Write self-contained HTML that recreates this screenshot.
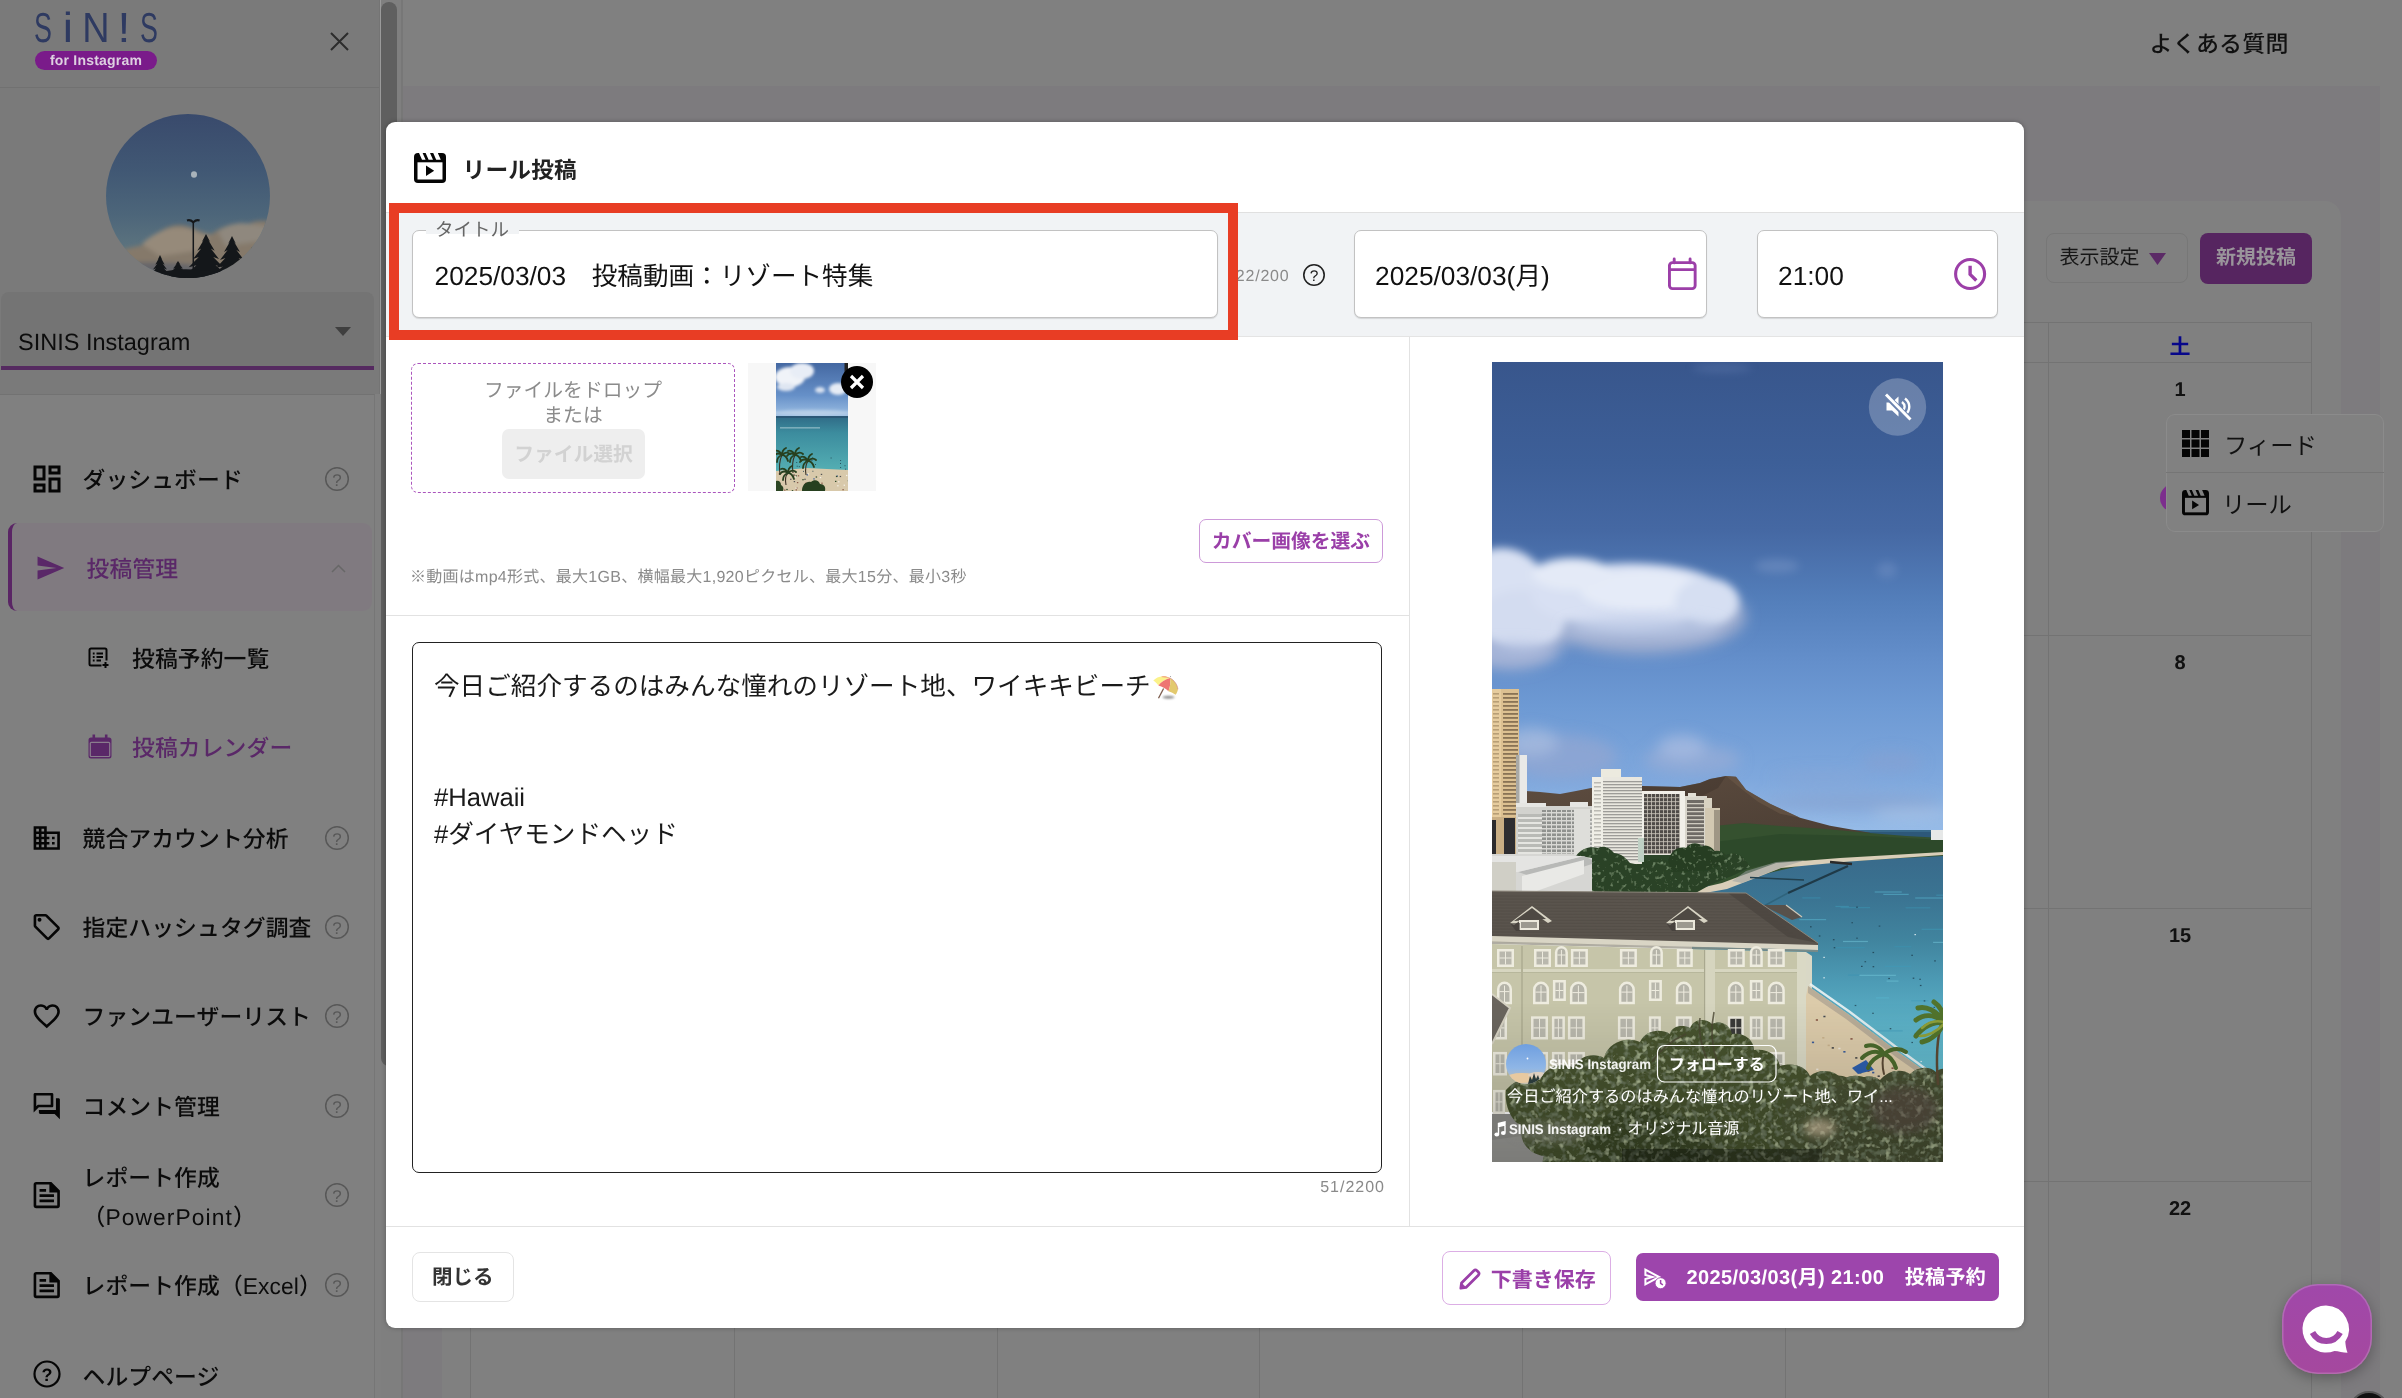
<!DOCTYPE html>
<html lang="ja">
<head>
<meta charset="utf-8">
<title>リール投稿</title>
<style>
*{box-sizing:border-box;margin:0;padding:0}
html,body{width:2402px;height:1398px;overflow:hidden;background:#7d7b7e}
body{position:relative;font-family:"Liberation Sans","Noto Sans CJK JP",sans-serif;color:#111;-webkit-font-smoothing:antialiased;text-rendering:geometricPrecision}
#root{position:absolute;left:0;top:0;width:2402px;height:1398px;overflow:hidden;will-change:transform}
.abs{position:absolute}
.jp{font-family:"Liberation Sans","Noto Sans CJK JP",sans-serif}
svg{display:block;overflow:visible}
/* ---------- background page (already dimmed) ---------- */
#topbar{left:402px;top:0;width:2000px;height:86px;background:#808080}
#rightstrip{left:2380px;top:0;width:22px;height:1398px;background:#808080}
#sidebar{left:0;top:0;width:380px;height:1398px;background:#7a7a7a;border-right:1px solid #747474}
#sbtop{left:0;top:0;width:379px;height:88px;border-bottom:1px solid #717171}
#navbox{left:0;top:394px;width:375px;height:1010px;background:#808080;border-top:1px solid #727272;border-right:1px solid #767676}
#scrolltrack{left:380px;top:0;width:23px;height:1398px;background:#7f7f7f;border-right:2px solid #777}
#scrollthumb{left:381px;top:2px;width:16px;height:1064px;border-radius:8px;background:#5f5f5f}
.nav{position:absolute;left:0;width:374px;height:60px}
.nav .ic{position:absolute;left:31px;top:50%;transform:translateY(-50%)}
.nav .tx{position:absolute;left:82.500px;top:50%;transform:translateY(-50%);margin-top:1px;font-size:22.800px;font-weight:500;white-space:nowrap;line-height:39px;color:#0b0b0b;letter-spacing:.1px}
.nav .hp{position:absolute;left:324px;top:50%;margin-top:-13px;width:26px;height:26px}
.nav.sub .ic{left:88px}
.nav.sub .tx{left:132px}
.lg{top:5px;height:46px;font-family:"Liberation Sans",sans-serif;font-size:42px;line-height:46px;color:#2e3a61;text-align:center;white-space:nowrap}
.lg b{display:inline-block;font-weight:400}
.pur{color:#5a2868 !important}
#card{left:442px;top:201px;width:1899px;height:1300px;background:#808080;border-radius:16px}
.vl{position:absolute;width:1px;background:#737373;top:322px;height:1100px}
.hl{position:absolute;height:1px;background:#737373;left:470px;width:1842px}
.dn{position:absolute;width:60px;left:2150px;text-align:center;font-weight:700;font-size:20px;color:#111;line-height:24px}
/* ---------- modal ---------- */
#modal{left:386px;top:122px;width:1638px;height:1206px;background:#fff;border-radius:9px;overflow:hidden;box-shadow:0 0 5px rgba(0,0,0,.28);will-change:transform}
#band{left:0;top:90px;width:1638px;height:125px;background:#f1f3f5;border-top:1px solid #e0e0e0;border-bottom:1px solid #e4e4e4}
.inp{position:absolute;background:#fff;border:1px solid #c2c2c2;border-radius:7px;top:108px;height:88px;box-shadow:0 1px 1px rgba(0,0,0,.12)}
.inp .v{position:absolute;left:21px;top:0;line-height:90px;font-size:25.600px;color:#111;white-space:nowrap}
.d{font-size:26.300px}
.gl{position:absolute;background:#e2e2e2}
.btn{position:absolute;border-radius:8px;white-space:nowrap;font-weight:700}
</style>
</head>
<body>
<div id="root">

<!-- ================= BACKGROUND PAGE ================= -->
<div class="abs" id="topbar"></div>
<div class="abs" id="rightstrip"></div>
<div class="abs" id="card"></div>
<div class="abs jp" style="left:2149.500px;top:27px;font-size:23px;font-weight:500;line-height:34px;color:#111;white-space:nowrap;letter-spacing:.2px">よくある質問</div>

<!--CALENDAR-->
<div class="vl" style="left:470px"></div><div class="vl" style="left:734px"></div><div class="vl" style="left:997px"></div><div class="vl" style="left:1259px"></div><div class="vl" style="left:1522px"></div><div class="vl" style="left:1785px"></div><div class="vl" style="left:2048px"></div><div class="vl" style="left:2311px"></div>
<div class="hl" style="top:322px"></div><div class="hl" style="top:362px"></div><div class="hl" style="top:635px"></div><div class="hl" style="top:908px"></div><div class="hl" style="top:1181px"></div>
<div class="abs jp" style="left:2150px;width:60px;top:334.500px;text-align:center;font-size:21px;font-weight:700;line-height:26px;color:#07078a">土</div>
<div class="dn" style="top:378px">1</div><div class="dn" style="top:651px">8</div><div class="dn" style="top:924px">15</div><div class="dn" style="top:1197px">22</div>
<!-- toolbar buttons -->
<div class="abs jp" style="left:2046px;top:233px;width:142px;height:50px;border:1px solid #777;border-radius:8px;font-size:20px;line-height:48px;padding-left:12.500px;color:#161616;white-space:nowrap">表示設定</div>
<svg class="abs" style="left:2149px;top:253px" width="17" height="12" viewBox="0 0 17 12"><path d="M0 0h17L8.5 12z" fill="#5b2a66"/></svg>
<div class="abs jp" style="left:2200px;top:233px;width:112px;height:51px;background:#562560;border-radius:8px;font-size:20px;font-weight:700;line-height:51px;text-align:center;color:#9a959b;white-space:nowrap">新規投稿</div>
<!-- purple chip sliver behind popup -->
<div class="abs" style="left:2160px;top:484px;width:30px;height:28px;border-radius:14px;background:#7c2e8d"></div>
<!-- popup menu -->
<div class="abs" style="left:2166px;top:414px;width:218px;height:118px;background:#818181;border:1px solid #8b8b8b;border-radius:9px"></div>
<div class="abs" style="left:2166px;top:472px;width:218px;height:1px;background:#757575"></div>
<svg class="abs" style="left:2182px;top:430px" width="27" height="27" viewBox="0 0 27 27"><g fill="#050505"><rect x="0" y="0" width="8" height="8"/><rect x="9.5" y="0" width="8" height="8"/><rect x="19" y="0" width="8" height="8"/><rect x="0" y="9.5" width="8" height="8"/><rect x="9.5" y="9.5" width="8" height="8"/><rect x="19" y="9.5" width="8" height="8"/><rect x="0" y="19" width="8" height="8"/><rect x="9.5" y="19" width="8" height="8"/><rect x="19" y="19" width="8" height="8"/></g></svg>
<div class="abs jp" style="left:2224px;top:429.500px;font-size:23.300px;line-height:32px;color:#111;white-space:nowrap">フィード</div>
<svg class="abs" style="left:2182px;top:489.500px" width="27" height="25.300" viewBox="0 0 32 30"><rect x="0" y="0" width="32" height="30" rx="4" fill="#050505"/><rect x="3.500" y="9.300" width="25" height="17.200" fill="#818181"/><path d="M4.800 -.500h3.600l3.200 7.300H8zM11.400 -.500h4.400l3.200 7.300h-4.400zM19 -.500h4.600l3.200 7.300h-4.600z" fill="#818181"/><path d="M12 12.500v10.400l8.200-5.200z" fill="#050505"/></svg>
<div class="abs jp" style="left:2222px;top:488.500px;font-size:23.300px;line-height:32px;color:#111;white-space:nowrap">リール</div>


<!--SIDEBAR-->
<div class="abs" id="sidebar"></div>
<div class="abs" id="sbtop"></div>
<div class="abs" id="scrolltrack"></div>
<div class="abs" style="left:380px;top:0;width:1px;height:394px;background:#9a9a9a"></div>
<div class="abs" style="left:375px;top:394px;width:6px;height:1004px;background:#808080"></div>
<div class="abs" id="scrollthumb"></div>
<!-- logo -->
<div class="abs lg" style="left:23.4px;width:40px;transform:scaleX(0.64)">S</div><div class="abs lg" style="left:47.900000000000006px;width:40px;transform:scaleX(1.1)">i</div><div class="abs lg" style="left:76.1px;width:40px;transform:scaleX(0.9)">N</div><div class="abs lg" style="left:104px;width:40px;transform:scaleX(1.1)">!</div><div class="abs lg" style="left:129px;width:40px;transform:scaleX(0.64)">S</div>
<div class="abs" style="left:35px;top:51px;width:122px;height:19px;border-radius:10px;background:#7a1b8a;color:#ddd0e0;font-family:'Liberation Sans',sans-serif;font-weight:700;font-size:14px;line-height:19px;text-align:center;letter-spacing:.2px">for Instagram</div>
<svg class="abs" style="left:330px;top:32px" width="19" height="19" viewBox="0 0 19 19"><path d="M1 1l17 17M18 1L1 18" stroke="#2c2c2c" stroke-width="2" fill="none"/></svg>
<!-- avatar -->
<svg class="abs" style="left:106px;top:114px" width="164" height="164" viewBox="0 0 164 164">
 <defs>
  <clipPath id="avc"><circle cx="82" cy="82" r="82"/></clipPath>
  <linearGradient id="avsky" x1="0" y1="0" x2="0" y2="1"><stop offset="0" stop-color="#394a6c"/><stop offset=".35" stop-color="#415874"/><stop offset=".62" stop-color="#4d667a"/><stop offset=".8" stop-color="#5b727e"/><stop offset="1" stop-color="#6a7a80"/></linearGradient>
  <filter id="avb" x="-20%" y="-20%" width="140%" height="140%"><feGaussianBlur stdDeviation="2.200"/></filter>
 </defs>
 <g clip-path="url(#avc)">
  <rect width="164" height="164" fill="url(#avsky)"/>
  <g filter="url(#avb)"><path d="M10 140c10-8 24-6 34-12 8-12 24-20 36-16 10 2 16 8 26 8 10-8 24-12 36-10 8-4 16-4 24-2v60H10z" fill="#85796a"/><path d="M36 130c10-10 26-18 40-16 12 0 18 8 28 8l-10 14-40 6z" fill="#968a7a"/><path d="M112 118c10-8 22-10 32-8l16 2v14l-40 6z" fill="#8f887e"/><path d="M0 152c30-6 70-4 100 0l64 4v10H0z" fill="#66666a"/></g>
  <ellipse cx="88" cy="60.500" rx="3" ry="3.300" fill="#a9b3ba"/>
  <path d="M87.300 164V108" stroke="#15181b" stroke-width="1.500" fill="none"/><path d="M81 106.500c2-.800 4.500 0 6.300 1.800 1.800-1.800 4.300-2.600 6.300-1.800" stroke="#15181b" stroke-width="2" fill="none"/>
  <g fill="#14171a"><path d="M100 120L95.7 128.3L97.6 126.3L91.3 136.7L95.2 134.6L87.0 145.0L92.8 142.9L82.7 153.3L90.5 151.2L78.3 161.7L88.1 159.6L74.0 170.0L126.0 170L111.9 159.6L121.7 161.7L109.5 151.2L117.3 153.3L107.2 142.9L113.0 145.0L104.8 134.6L108.7 136.7L102.4 126.3L104.3 128.3z"/><path d="M126 122L122.0 130.0L123.8 128.0L118.0 138.0L121.6 136.0L114.0 146.0L119.4 144.0L110.0 154.0L117.2 152.0L106.0 162.0L115.0 160.0L102.0 170.0L150.0 170L137.0 160.0L146.0 162.0L134.8 152.0L142.0 154.0L132.6 144.0L138.0 146.0L130.4 136.0L134.0 138.0L128.2 128.0L130.0 130.0z"/><path d="M54 141L51.7 145.8L52.7 144.6L49.3 150.7L51.4 149.5L47.0 155.5L50.1 154.3L44.7 160.3L48.9 159.1L42.3 165.2L47.6 164.0L40.0 170.0L68.0 170L60.4 164.0L65.7 165.2L59.1 159.1L63.3 160.3L57.9 154.3L61.0 155.5L56.6 149.5L58.7 150.7L55.3 144.6L56.3 145.8z"/><path d="M72 147L69.5 150.8L70.6 149.9L67.0 154.7L69.2 153.7L64.5 158.5L67.9 157.5L62.0 162.3L66.5 161.4L59.5 166.2L65.1 165.2L57.0 170.0L87.0 170L78.9 165.2L84.5 166.2L77.5 161.4L82.0 162.3L76.1 157.5L79.5 158.5L74.8 153.7L77.0 154.7L73.4 149.9L74.5 150.8z"/><path d="M146 133L144.3 139.2L145.1 137.6L142.7 145.3L144.2 143.8L141.0 151.5L143.2 150.0L139.3 157.7L142.3 156.1L137.7 163.8L141.4 162.3L136.0 170.0L156.0 170L150.6 162.3L154.3 163.8L149.7 156.1L152.7 157.7L148.8 150.0L151.0 151.5L147.8 143.8L149.3 145.3L146.9 137.6L147.7 139.2z"/><path d="M44 164c10-8 30-10 50-8s40 2 60 8z"/></g>
 </g>
</svg>
<!-- account select -->
<div class="abs" style="left:1px;top:292px;width:373px;height:78px;background:#747474;border-radius:8px 8px 0 0;border-bottom:4px solid #552a60"></div>
<div class="abs" style="left:18px;top:324px;font-family:'Liberation Sans',sans-serif;font-size:23.500px;line-height:36px;color:#0d0d0d;white-space:nowrap">SINIS Instagram</div>
<svg class="abs" style="left:335px;top:327px" width="16" height="9" viewBox="0 0 16 9"><path d="M0 0h16L8 9z" fill="#3f3f3f"/></svg>
<div class="abs" id="navbox"></div>
<!-- active item bg -->
<div class="abs" style="left:8px;top:523px;width:364px;height:88px;background:#807a80;border-left:4.500px solid #5a2565;border-radius:9px"></div>
<div class="nav " style="top:449.0px;height:60px"><svg class="ic" style="left:28.800px" width="36" height="36" viewBox="0 0 24 24" fill="#050505"><path d="M19 5v2h-4V5h4M9 5v6H5V5h4m10 8v6h-4v-6h4M9 17v2H5v-2h4M21 3h-8v6h8V3zM11 3H3v10h8V3zm10 8h-8v10h8V11zm-10 4H3v6h8v-6z"/></svg><div class="tx jp ">ダッシュボード</div><svg class="hp" viewBox="0 0 26 26"><circle cx="13" cy="13" r="11.300" fill="none" stroke="#585858" stroke-width="1.500"/><text x="13" y="19.500" text-anchor="middle" font-family="Liberation Sans, sans-serif" font-size="17" fill="#585858">?</text></svg></div>
<div class="nav " style="top:538.0px;height:60px"><svg class="ic" style="left:35.300px" width="30.500" height="30.500" viewBox="0 0 24 24" fill="#5a2868"><path d="M2.010 21L23 12 2.010 3 2 10l15 2-15 2z"/></svg><div class="tx jp pur" style="left:86.500px">投稿管理</div></div>
<svg class="abs" style="left:331px;top:564px" width="15" height="9" viewBox="0 0 15 9"><path d="M1 8l6.500-6.500L14 8" fill="none" stroke="#676767" stroke-width="1.500"/></svg>
<div class="nav sub" style="top:628.0px;height:60px"><svg class="ic" width="22" height="22" viewBox="0 0 22 22" fill="none" stroke="#050505" stroke-width="2"><path d="M13.500 18.500H3a1.500 1.500 0 0 1-1.500-1.500V3A1.500 1.500 0 0 1 3 1.500h14A1.500 1.500 0 0 1 18.500 3v10.500"/><path d="M8.500 6.500h6.500M8.500 10h6.500M8.500 13.500h4.500M4.800 6.500h1.800M4.800 10h1.800M4.800 13.500h1.800M17.500 15v6M14.500 18h6"/></svg><div class="tx jp ">投稿予約一覧</div></div>
<div class="nav sub" style="top:717.0px;height:60px"><svg class="ic" width="24" height="25" viewBox="0 0 24 25"><path d="M3 3h18a2.500 2.500 0 0 1 2.500 2.500v16A2.500 2.500 0 0 1 21 24H3A2.500 2.500 0 0 1 .5 21.500v-16A2.500 2.500 0 0 1 3 3z" fill="#5a2868"/><rect x="2.300" y="7.800" width="19.400" height="14.200" rx="1" fill="none" stroke="#8a7d8d" stroke-width="1.200"/><rect x="4.500" y="0" width="2.600" height="5" fill="#5a2868"/><rect x="16.900" y="0" width="2.600" height="5" fill="#5a2868"/></svg><div class="tx jp pur">投稿カレンダー</div></div>
<div class="nav " style="top:807.5px;height:60px"><svg class="ic" width="31.500" height="31.500" viewBox="0 0 24 24" fill="#050505"><path d="M12 7V3H2v18h20V7H12zM6 19H4v-2h2v2zm0-4H4v-2h2v2zm0-4H4V9h2v2zm0-4H4V5h2v2zm4 12H8v-2h2v2zm0-4H8v-2h2v2zm0-4H8V9h2v2zm0-4H8V5h2v2zm10 12h-8v-2h2v-2h-2v-2h2v-2h-2V9h8v10zm-2-8h-2v2h2v-2zm0 4h-2v2h2v-2z"/></svg><div class="tx jp ">競合アカウント分析</div><svg class="hp" viewBox="0 0 26 26"><circle cx="13" cy="13" r="11.300" fill="none" stroke="#585858" stroke-width="1.500"/><text x="13" y="19.500" text-anchor="middle" font-family="Liberation Sans, sans-serif" font-size="17" fill="#585858">?</text></svg></div>
<div class="nav " style="top:897.0px;height:60px"><svg class="ic" width="31.500" height="31.500" viewBox="0 0 24 24" fill="#050505"><path d="M21.410 11.580l-9-9C12.050 2.220 11.550 2 11 2H4c-1.100 0-2 .900-2 2v7c0 .550.220 1.050.590 1.420l9 9c.360.360.860.580 1.410.580s1.050-.220 1.410-.590l7-7c.370-.360.590-.860.590-1.410s-.230-1.060-.590-1.420zM13 20.010L4 11V4h7v-.010l9 9-7 7.020z"/><circle cx="6.500" cy="6.500" r="1.500"/></svg><div class="tx jp ">指定ハッシュタグ調査</div><svg class="hp" viewBox="0 0 26 26"><circle cx="13" cy="13" r="11.300" fill="none" stroke="#585858" stroke-width="1.500"/><text x="13" y="19.500" text-anchor="middle" font-family="Liberation Sans, sans-serif" font-size="17" fill="#585858">?</text></svg></div>
<div class="nav " style="top:986.0px;height:60px"><svg class="ic" width="31.500" height="31.500" viewBox="0 0 24 24" fill="#050505"><path d="M16.500 3c-1.740 0-3.410.810-4.500 2.090C10.910 3.810 9.240 3 7.500 3 4.420 3 2 5.420 2 8.500c0 3.780 3.400 6.860 8.550 11.540L12 21.350l1.450-1.320C18.600 15.360 22 12.280 22 8.500 22 5.420 19.580 3 16.500 3zm-4.400 15.550l-.100.100-.100-.100C7.140 14.240 4 11.390 4 8.500 4 6.500 5.500 5 7.500 5c1.540 0 3.040.990 3.570 2.360h1.870C13.460 5.990 14.960 5 16.500 5c2 0 3.500 1.500 3.500 3.500 0 2.890-3.140 5.740-7.900 10.050z"/></svg><div class="tx jp ">ファンユーザーリスト</div><svg class="hp" viewBox="0 0 26 26"><circle cx="13" cy="13" r="11.300" fill="none" stroke="#585858" stroke-width="1.500"/><text x="13" y="19.500" text-anchor="middle" font-family="Liberation Sans, sans-serif" font-size="17" fill="#585858">?</text></svg></div>
<div class="nav " style="top:1076.0px;height:60px"><svg class="ic" width="31.500" height="31.500" viewBox="0 0 24 24" fill="#050505"><path d="M15 4v7H5.170L4 12.170V4h11m1-2H3c-.550 0-1 .450-1 1v14l4-4h10c.550 0 1-.450 1-1V3c0-.550-.450-1-1-1zm5 4h-2v9H6v2c0 .550.450 1 1 1h11l4 4V7c0-.550-.450-1-1-1z"/></svg><div class="tx jp ">コメント管理</div><svg class="hp" viewBox="0 0 26 26"><circle cx="13" cy="13" r="11.300" fill="none" stroke="#585858" stroke-width="1.500"/><text x="13" y="19.500" text-anchor="middle" font-family="Liberation Sans, sans-serif" font-size="17" fill="#585858">?</text></svg></div>
<div class="nav " style="top:1150.0px;height:90px"><svg class="ic" width="31.500" height="31.500" viewBox="0 0 24 24" fill="#050505"><path d="M4 2h11.500L22 8.500V20a2 2 0 0 1-2 2H4a2 2 0 0 1-2-2V4a2 2 0 0 1 2-2zm0 2v16h16V10h-6V4z"/><path d="M14.500 3l6.500 6.500h-6.500z"/><path d="M6.500 15.500h11v2h-11zm0-4h11v2h-11zm0-4h5v2h-5z"/></svg><div class="tx jp " style="margin-top:3px">レポート作成<br>（<span style="letter-spacing:1.100px">PowerPoint</span>）</div><svg class="hp" viewBox="0 0 26 26"><circle cx="13" cy="13" r="11.300" fill="none" stroke="#585858" stroke-width="1.500"/><text x="13" y="19.500" text-anchor="middle" font-family="Liberation Sans, sans-serif" font-size="17" fill="#585858">?</text></svg></div>
<div class="nav " style="top:1255.0px;height:60px"><svg class="ic" width="31.500" height="31.500" viewBox="0 0 24 24" fill="#050505"><path d="M4 2h11.500L22 8.500V20a2 2 0 0 1-2 2H4a2 2 0 0 1-2-2V4a2 2 0 0 1 2-2zm0 2v16h16V10h-6V4z"/><path d="M14.500 3l6.500 6.500h-6.500z"/><path d="M6.500 15.500h11v2h-11zm0-4h11v2h-11zm0-4h5v2h-5z"/></svg><div class="tx jp ">レポート作成（Excel）</div><svg class="hp" viewBox="0 0 26 26"><circle cx="13" cy="13" r="11.300" fill="none" stroke="#585858" stroke-width="1.500"/><text x="13" y="19.500" text-anchor="middle" font-family="Liberation Sans, sans-serif" font-size="17" fill="#585858">?</text></svg></div>
<div class="nav " style="top:1345.5px;height:60px"><svg class="ic" style="left:33px;margin-top:-1.500px" width="28" height="28" viewBox="0 0 28 28"><circle cx="14" cy="14" r="12.500" fill="none" stroke="#050505" stroke-width="2.200"/><text x="14" y="20.500" text-anchor="middle" font-family="Liberation Sans, sans-serif" font-size="18" font-weight="700" fill="#050505">?</text></svg><div class="tx jp ">ヘルプページ</div></div>


<!--MODAL-->
<div class="abs" id="modal">
 <!-- header -->
 <svg class="abs" style="left:28px;top:30.500px" width="32" height="30" viewBox="0 0 32 30"><rect x="0" y="0" width="32" height="30" rx="4" fill="#050505"/><rect x="3.500" y="9.300" width="25" height="17.200" fill="#fff"/><path d="M4.800 -.500h3.600l3.200 7.300H8zM11.400 -.500h4.400l3.200 7.300h-4.400zM19 -.500h4.600l3.200 7.300h-4.600z" fill="#fff"/><path d="M12 12.500v10.400l8.200-5.200z" fill="#050505"/></svg>
 <div class="abs jp" style="left:76.500px;top:31px;font-size:22.700px;font-weight:700;line-height:34px;color:#222;white-space:nowrap;letter-spacing:.2px">リール投稿</div>
 <!-- band -->
 <div class="abs" id="band"></div>
 <!-- title input -->
 <div class="inp" style="left:26px;width:806px"><div class="v jp" style="left:21.500px"><span class="d">2025/03/03</span>　投稿動画：リゾート特集</div></div>
 <div class="abs" style="left:40px;top:102px;width:93px;height:10px;background:#f1f3f5"></div>
 <div class="abs jp" style="left:49px;top:94px;font-size:18.500px;line-height:28px;color:#666;white-space:nowrap">タイトル</div>
 <div class="abs jp" style="left:839.500px;top:142px;width:64px;text-align:right;font-size:16px;line-height:26px;color:#8a8a8a;letter-spacing:.8px;white-space:nowrap">22/200</div>
 <svg class="abs" style="left:916px;top:141px" width="24" height="24" viewBox="0 0 24 24"><circle cx="12" cy="12" r="10.200" fill="none" stroke="#222" stroke-width="1.600"/><text x="12" y="17.500" text-anchor="middle" font-family="Liberation Sans, sans-serif" font-size="15.500" fill="#222">?</text></svg>
 <!-- date input -->
 <div class="inp" style="left:967.500px;width:353px"><div class="v jp" style="left:20.500px"><span class="d">2025/03/03(</span>月<span class="d">)</span></div></div>
 <svg class="abs" style="left:1281px;top:135px" width="31" height="34" viewBox="0 0 31 34" fill="none" stroke="#9c3fa8" stroke-width="2.900"><rect x="2.450" y="5.600" width="25.700" height="26" rx="3"/><path d="M2.500 12.600h25.700"/><path d="M7.200 1.900v4M23.100 1.900v4" stroke-linecap="round"/></svg>
 <!-- time input -->
 <div class="inp" style="left:1370.500px;width:241.500px"><div class="v jp" style="left:20.500px"><span class="d">21:00</span></div></div>
 <svg class="abs" style="left:1566px;top:134px" width="36" height="36" viewBox="0 0 36 36" fill="none" stroke="#9c3fa8" stroke-width="3.100"><circle cx="18.100" cy="18" r="14.500"/><path d="M18.100 9.800v8.600l6.200 6.100" stroke-width="3.400"/></svg>
 <!-- red highlight -->
 <div class="abs" style="left:3px;top:81px;width:849px;height:137px;border:10.500px solid #e83d24"></div>
 <!-- dividers -->
 <div class="gl" style="left:1023px;top:215px;width:1px;height:889px"></div>
 <div class="gl" style="left:0;top:493px;width:1023px;height:1px"></div>
 <div class="gl" style="left:0;top:1104px;width:1638px;height:1px"></div>
 <!-- drop zone -->
 <div class="abs" style="left:25px;top:241px;width:324px;height:130px;border:1.300px dashed #ab55bd;border-radius:7px"></div>
 <div class="abs jp" style="left:25px;top:257px;width:324px;text-align:center;font-size:19.800px;line-height:25px;color:#8b8b8b;white-space:nowrap">ファイルをドロップ<br>または</div>
 <div class="abs jp" style="left:116px;top:306.500px;width:143px;height:50.500px;border-radius:7px;background:#eee;color:#d2d2d2;font-weight:700;font-size:19.800px;line-height:53px;text-align:center;white-space:nowrap">ファイル選択</div>
 <!-- thumbnail -->
 <div class="abs" style="left:362px;top:241px;width:128px;height:128px;background:#f7f7f7"></div>
 <!--THUMB-->
<svg class="abs" style="left:390px;top:241px" width="72" height="128" viewBox="0 0 72 128">
<defs><clipPath id="tc"><rect width="72" height="128"/></clipPath><linearGradient id="tsky" x1="0" y1="0" x2="0" y2="1"><stop offset="0" stop-color="#4468a2"/><stop offset=".6" stop-color="#6690c8"/><stop offset="1" stop-color="#9ec0e4"/></linearGradient><linearGradient id="tsea" x1="0" y1="0" x2="0" y2="1"><stop offset="0" stop-color="#2f6a86"/><stop offset=".3" stop-color="#3c8c9e"/><stop offset="1" stop-color="#55b0b4"/></linearGradient></defs>
<g clip-path="url(#tc)"><rect width="72" height="54" fill="url(#tsky)"/>
<g filter="url(#b2)"><ellipse cx="14" cy="14" rx="15" ry="10" fill="#f0f3f8"/><ellipse cx="26" cy="8" rx="12" ry="8" fill="#e8edf6"/><ellipse cx="10" cy="24" rx="9" ry="4" fill="#dfe6f2"/><ellipse cx="62" cy="26" rx="9" ry="6" fill="#e6ecf5"/><ellipse cx="44" cy="27" rx="5" ry="3" fill="#d9e2f0"/><ellipse cx="36" cy="50" rx="40" ry="3" fill="#b7cfe8"/></g>
<rect y="53" width="72" height="56" fill="url(#tsea)"/><rect y="53" width="72" height="2" fill="#2b5877"/><rect x="4" y="64.500" width="40" height=".800" fill="#dfeef0" opacity=".8"/>
<path d="M0 108l30-3 42 2v21H0z" fill="#d8c9ab"/>
<rect x="37.7" y="125.8" width="1.400" height="1.200" fill="#f3efe6"/>
<rect x="66.4" y="126.1" width="1.400" height="1.200" fill="#8a5b4a"/>
<rect x="60.5" y="112.5" width="1.400" height="1.200" fill="#3b5d9a"/>
<rect x="28.3" y="115.7" width="1.400" height="1.200" fill="#555"/>
<rect x="17.3" y="111.3" width="1.400" height="1.200" fill="#555"/>
<rect x="21.8" y="112.2" width="1.400" height="1.200" fill="#8a5b4a"/>
<rect x="67.6" y="121.6" width="1.400" height="1.200" fill="#f3efe6"/>
<rect x="10.3" y="125.9" width="1.400" height="1.200" fill="#2f4a2a"/>
<rect x="15.8" y="127.1" width="1.400" height="1.200" fill="#2f4a2a"/>
<rect x="63.7" y="112.9" width="1.400" height="1.200" fill="#555"/>
<rect x="59.9" y="112.9" width="1.400" height="1.200" fill="#2f4a2a"/>
<rect x="71.6" y="117.3" width="1.400" height="1.200" fill="#2f4a2a"/>
<rect x="14.1" y="115.7" width="1.400" height="1.200" fill="#555"/>
<rect x="26.3" y="116.1" width="1.400" height="1.200" fill="#2f4a2a"/>
<rect x="31.7" y="110.3" width="1.400" height="1.200" fill="#f3efe6"/>
<rect x="37.3" y="115.3" width="1.400" height="1.200" fill="#3b5d9a"/>
<rect x="8.1" y="126.5" width="1.400" height="1.200" fill="#8a5b4a"/>
<rect x="70" y="111.9" width="1.400" height="1.200" fill="#f3efe6"/>
<rect x="19.6" y="126.3" width="1.400" height="1.200" fill="#8a5b4a"/>
<rect x="19.5" y="112.3" width="1.400" height="1.200" fill="#2f4a2a"/>
<rect x="61.2" y="122.2" width="1.400" height="1.200" fill="#f3efe6"/>
<rect x="29.2" y="119.7" width="1.400" height="1.200" fill="#b2483e"/>
<rect x="41.1" y="122.6" width="1.400" height="1.200" fill="#3b5d9a"/>
<rect x="20.1" y="124.4" width="1.400" height="1.200" fill="#8a5b4a"/>
<rect x="30.6" y="111.3" width="1.400" height="1.200" fill="#3b5d9a"/>
<rect x="45.7" y="124.4" width="1.400" height="1.200" fill="#3b5d9a"/>
<rect x="43.8" y="114" width="1.400" height="1.200" fill="#f3efe6"/>
<rect x="62.1" y="118.2" width="1.400" height="1.200" fill="#f3efe6"/>
<rect x="71.6" y="117.5" width="1.400" height="1.200" fill="#f3efe6"/>
<rect x="44.8" y="110.8" width="1.400" height="1.200" fill="#555"/>
<rect x="17.2" y="112" width="1.400" height="1.200" fill="#8a5b4a"/>
<rect x="18.9" y="113.3" width="1.400" height="1.200" fill="#f3efe6"/>
<rect x="45.3" y="119.6" width="1.400" height="1.200" fill="#8a5b4a"/>
<rect x="20.9" y="119" width="1.400" height="1.200" fill="#8a5b4a"/>
<rect x="19.5" y="124.5" width="1.400" height="1.200" fill="#f3efe6"/>
<rect x="2.7" y="110.3" width="1.400" height="1.200" fill="#b2483e"/>
<rect x="39.7" y="113.4" width="1.400" height="1.200" fill="#2f4a2a"/>
<rect x="17.7" y="118" width="1.400" height="1.200" fill="#555"/>
<rect x="59" y="117.8" width="1.400" height="1.200" fill="#2f4a2a"/>
<rect x="39.3" y="126" width="1.400" height="1.200" fill="#b2483e"/>
<rect x="35.4" y="97" width="1" height=".800" fill="#1f3d4a"/>
<rect x="31.5" y="96.8" width="1" height=".800" fill="#1f3d4a"/>
<rect x="64.1" y="104.2" width="1" height=".800" fill="#1f3d4a"/>
<rect x="27" y="107.9" width="1" height=".800" fill="#1f3d4a"/>
<rect x="69.1" y="105.7" width="1" height=".800" fill="#1f3d4a"/>
<rect x="20.7" y="102.8" width="1" height=".800" fill="#1f3d4a"/>
<rect x="64" y="100" width="1" height=".800" fill="#1f3d4a"/>
<rect x="22.8" y="103.3" width="1" height=".800" fill="#1f3d4a"/>
<rect x="39" y="101.1" width="1" height=".800" fill="#1f3d4a"/>
<rect x="68.5" y="102.4" width="1" height=".800" fill="#1f3d4a"/>
<rect x="54.6" y="94.6" width="1" height=".800" fill="#1f3d4a"/>
<rect x="29.3" y="97.8" width="1" height=".800" fill="#1f3d4a"/>
<rect x="20.2" y="99.1" width="1" height=".800" fill="#1f3d4a"/>
<rect x="36.4" y="107.8" width="1" height=".800" fill="#1f3d4a"/>
<rect x="36.2" y="94.5" width="1" height=".800" fill="#1f3d4a"/>
<rect x="64.1" y="97.1" width="1" height=".800" fill="#1f3d4a"/>
<rect x="29.1" y="98.7" width="1" height=".800" fill="#1f3d4a"/>
<rect x="24.2" y="97.9" width="1" height=".800" fill="#1f3d4a"/>
<path d="M4 112c-1-8 0-16 2-20" stroke="#3b3226" stroke-width="1.100" fill="none"/>
<path d="M6 92c-3-2-6-2-8 1M6 92c-2-4-5-5-7-4M6 92c3-3 6-3 8-1M6 92c3 0 5 3 6 6M6 92c-3 1-5 4-5 7M6 92c0-4 2-6 4-7" stroke="#27401f" stroke-width="1.800" fill="none" stroke-linecap="round"/>
<path d="M17 110c-1-7 0-14 2-18" stroke="#3b3226" stroke-width="1.100" fill="none"/>
<path d="M19 92c-3-2-6-2-8 1M19 92c-2-4-5-5-7-4M19 92c3-3 6-3 8-1M19 92c3 0 5 3 6 6M19 92c-3 1-5 4-5 7M19 92c0-4 2-6 4-7" stroke="#27401f" stroke-width="1.800" fill="none" stroke-linecap="round"/>
<path d="M30 112c-1-6 0-11 2-14" stroke="#3b3226" stroke-width="1.100" fill="none"/>
<path d="M32 98c-3-2-6-2-8 1M32 98c-2-4-5-5-7-4M32 98c3-3 6-3 8-1M32 98c3 0 5 3 6 6M32 98c-3 1-5 4-5 7M32 98c0-4 2-6 4-7" stroke="#27401f" stroke-width="1.800" fill="none" stroke-linecap="round"/>
<path d="M10 122c-1-5 0-10 2-12" stroke="#3b3226" stroke-width="1.100" fill="none"/>
<path d="M12 110c-3-2-6-2-8 1M12 110c-2-4-5-5-7-4M12 110c3-3 6-3 8-1M12 110c3 0 5 3 6 6M12 110c-3 1-5 4-5 7M12 110c0-4 2-6 4-7" stroke="#27401f" stroke-width="1.800" fill="none" stroke-linecap="round"/>
<path d="M26 128c0-6 4-10 9-9 3-3 8-2 9 2 4 0 6 3 5 7z" fill="#27401f"/><path d="M0 128v-10c3-1 5 1 5 4 2 1 3 3 2 6z" fill="#2b4523"/>
<rect x="68.500" y="0" width="3.500" height="20" fill="#222"/></g></svg>
<!--/THUMB-->
 <svg class="abs" style="left:455px;top:244px" width="32" height="32" viewBox="0 0 32 32"><circle cx="16" cy="16" r="16" fill="#000"/><path d="M10 10l12 12M22 10L10 22" stroke="#fff" stroke-width="3.200" stroke-linecap="butt"/></svg>
 <!-- cover button -->
 <div class="btn jp" style="left:813px;top:397px;width:184px;height:44px;border:1.300px solid #cd9ad9;color:#9a3fa8;font-size:19.800px;line-height:45.500px;text-align:center;border-radius:7px">カバー画像を選ぶ</div>
 <div class="abs jp" style="left:24px;top:442.500px;font-size:16px;line-height:26px;color:#8a8a8a;white-space:nowrap;letter-spacing:.270px">※動画はmp4形式、最大1GB、横幅最大1,920ピクセル、最大15分、最小3秒</div>
 <!-- textarea -->
 <div class="abs" style="left:26px;top:520px;width:970px;height:531px;border:1.500px solid #222;border-radius:7px"></div>
 <div class="abs jp" style="left:48px;top:547px;font-size:25.600px;line-height:37px;color:#1a1a1a;white-space:nowrap">今日ご紹介するのはみんな憧れのリゾート地、ワイキキビーチ<svg style="display:inline-block;vertical-align:-5px;margin-left:2px" width="25" height="24" viewBox="0 0 25 24"><defs><filter id="ub" x="-30%" y="-80%" width="160%" height="260%"><feGaussianBlur stdDeviation=".800"/></filter></defs><ellipse cx="15.500" cy="21.300" rx="6" ry="1.500" fill="#8c8c8c" filter="url(#ub)"/><path d="M10.600 12.500L5.500 22.300" stroke="#7b5b4c" stroke-width="1.300"/><path d="M16.900 1.200l.900-1" stroke="#777" stroke-width=".800"/><path d="M.300 4.600C2.500 2 6 .400 9.700.200c2.800-.100 5.300.500 7.300 1.800C12 3.500 8 6 5.400 9.600 4 7.500 2.200 5.800.300 4.600z" fill="#fbf28a"/><path d="M9.700.200c2.800-.100 5.300.500 7.300 1.800-3-.400-6.500-.600-9-.900z" fill="#f29b83"/><path d="M17 2c-5 1.500-9 4-11.600 7.600 3.800 1.200 7.200 3 10 5.600C17.300 10.800 17.800 6.300 17 2z" fill="#ee7572"/><path d="M17 2c4.300 2.400 7.300 6.400 7.900 11.300-.200 2-1 3.800-2.300 5.400-2-1.500-4.400-2.700-7.200-3.500C17.300 10.800 17.800 6.300 17 2z" fill="#e3c96e"/><path d="M17 2c4.300 2.400 7.300 6.400 7.900 11.300" fill="none" stroke="#c9787a" stroke-width=".600"/></svg><br><br><br>#Hawaii<br>#ダイヤモンドヘッド</div>
 <div class="abs jp" style="left:899px;top:1052.500px;width:100px;text-align:right;font-size:16px;line-height:26px;color:#8a8a8a;letter-spacing:1px">51/2200</div>
 <!-- footer -->
 <div class="btn jp" style="left:25.500px;top:1130px;width:102.500px;height:50px;border:1.300px solid #e4e4e4;color:#333;font-size:20.500px;line-height:49.500px;text-align:center">閉じる</div>
 <div class="btn jp" style="left:1056px;top:1129px;width:168.500px;height:54px;border:1.300px solid #dcaee5;color:#9a3fa8;font-size:21px;line-height:58.500px;padding-left:47.700px">下書き保存</div>
 <svg class="abs" style="left:1072px;top:1144.500px" width="24" height="24" viewBox="0 0 24 24" fill="none" stroke="#9a3fa8" stroke-width="2.700" stroke-linejoin="round"><path d="M2.800 21.200l.700-5.200L15.800 3.700a2.300 2.300 0 0 1 3.200 0l1.300 1.300a2.300 2.300 0 0 1 0 3.200L8 20.500z"/><path d="M3 21l.800-4.500 3.800 3.800z" fill="#9a3fa8" stroke-width="1"/></svg>
 <div class="btn jp" style="left:1250px;top:1131px;width:363px;height:48px;background:#9d45ac;color:#fff;font-size:20px;line-height:50.500px;padding-left:50.500px;border-radius:7px;letter-spacing:.400px">2025/03/03(月) 21:00　投稿予約</div>
 <svg class="abs" style="left:1258px;top:1145.500px" width="23" height="22" viewBox="0 0 23 22"><path d="M1.400 1.600L15.200 9 1.400 16.400v-5.300L8.600 9 1.400 6.900z" fill="none" stroke="#fff" stroke-width="2" stroke-linejoin="miter"/><circle cx="16.600" cy="15.200" r="5.500" fill="#fff" stroke="#9d45ac" stroke-width=".800"/><path d="M16.600 12v3.400l2.300 1.500" stroke="#9d45ac" stroke-width="1.500" fill="none"/></svg>
 <!--PHOTO-->
<svg class="abs" style="left:1106px;top:240px" width="451" height="800" viewBox="0 0 451 800">
<defs>
<clipPath id="pc"><rect width="451" height="800"/></clipPath>
<linearGradient id="sky" x1="0" y1="0" x2="0" y2="1"><stop offset="0" stop-color="#38568c"/><stop offset=".21" stop-color="#3d5f98"/><stop offset=".35" stop-color="#4568a3"/><stop offset=".5" stop-color="#547fbb"/><stop offset=".625" stop-color="#648fcb"/><stop offset=".72" stop-color="#6e9ad4"/><stop offset=".87" stop-color="#7fa8dd"/><stop offset="1" stop-color="#9cc0ea"/></linearGradient>
<linearGradient id="sea" x1="0" y1="0" x2="0" y2="1"><stop offset="0" stop-color="#38698a"/><stop offset=".1" stop-color="#396c8c"/><stop offset=".21" stop-color="#3b7593"/><stop offset=".33" stop-color="#41859f"/><stop offset=".447" stop-color="#4d9bb5"/><stop offset=".565" stop-color="#5bb0c6"/><stop offset=".7" stop-color="#63bacd"/><stop offset="1" stop-color="#63bacd"/></linearGradient>
<linearGradient id="cl" x1="0" y1="0" x2="0" y2="1"><stop offset="0" stop-color="#eef2fb"/><stop offset=".55" stop-color="#dfe6f6"/><stop offset="1" stop-color="#a9b7d8"/></linearGradient>
<linearGradient id="mt" x1="0" y1="0" x2="1" y2="1"><stop offset="0" stop-color="#5e4d40"/><stop offset="1" stop-color="#4a3d33"/></linearGradient>
<linearGradient id="bt" x1="0" y1="0" x2="0" y2="1"><stop offset="0" stop-color="#000" stop-opacity="0"/><stop offset="1" stop-color="#000" stop-opacity=".2"/></linearGradient>
<linearGradient id="avs" x1="0" y1="0" x2="0" y2="1"><stop offset="0" stop-color="#6f9fe0"/><stop offset=".6" stop-color="#8fb6e6"/><stop offset="1" stop-color="#c8c0b0"/></linearGradient>
<filter id="b8" x="-30%" y="-30%" width="160%" height="160%"><feGaussianBlur stdDeviation="7"/></filter>
<filter id="b4" x="-30%" y="-30%" width="160%" height="160%"><feGaussianBlur stdDeviation="4"/></filter>
<filter id="b2" x="-30%" y="-30%" width="160%" height="160%"><feGaussianBlur stdDeviation="1.600"/></filter>
<filter id="b1" x="-10%" y="-10%" width="120%" height="120%"><feGaussianBlur stdDeviation=".700"/></filter>
<filter id="lf" x="0" y="0" width="100%" height="100%"><feTurbulence type="fractalNoise" baseFrequency=".22" numOctaves="2" seed="4" result="n"/><feColorMatrix in="n" type="matrix" values="0 0 0 0 .21  0 0 0 0 .32  0 0 0 0 .18  3 0 0 0 -1.75" result="m"/><feComposite in="m" in2="SourceGraphic" operator="in"/><feMerge><feMergeNode in="SourceGraphic"/><feMergeNode/></feMerge></filter>
<filter id="lf2" x="0" y="0" width="100%" height="100%"><feTurbulence type="fractalNoise" baseFrequency=".16" numOctaves="2" seed="9" result="n"/><feColorMatrix in="n" type="matrix" values="0 0 0 0 .41  0 0 0 0 .48  0 0 0 0 .29  4 0 0 0 -2.3" result="m1"/><feColorMatrix in="n" type="matrix" values="0 0 0 0 .15  0 0 0 0 .19  0 0 0 0 .11  0 4 0 0 -1.95" result="m2"/><feComposite in="m1" in2="SourceGraphic" operator="in" result="hl"/><feComposite in="m2" in2="SourceGraphic" operator="in" result="dk"/><feMerge><feMergeNode in="SourceGraphic"/><feMergeNode in="dk"/><feMergeNode in="hl"/></feMerge></filter>
</defs>
<g clip-path="url(#pc)">
<rect width="451" height="480" fill="url(#sky)"/>
<g filter="url(#b4)" opacity=".35"><ellipse cx="285" cy="204" rx="22" ry="7" fill="#8aa3cf"/><ellipse cx="395" cy="208" rx="10" ry="8" fill="#7f9acb"/><ellipse cx="230" cy="6" rx="30" ry="4" fill="#6f89bd"/></g>
<g filter="url(#b8)"><ellipse cx="70" cy="395" rx="55" ry="22" fill="#8ea6d2" opacity=".85"/><ellipse cx="200" cy="398" rx="48" ry="15" fill="#93abd6" opacity=".8"/><ellipse cx="40" cy="380" rx="26" ry="14" fill="#a9bde0" opacity=".7"/><ellipse cx="190" cy="385" rx="24" ry="12" fill="#a7bbe0" opacity=".75"/><ellipse cx="360" cy="440" rx="90" ry="9" fill="#86a3d0" opacity=".7"/><ellipse cx="400" cy="400" rx="30" ry="10" fill="#86a0cf" opacity=".55"/><ellipse cx="330" cy="415" rx="50" ry="6" fill="#8aa6d4" opacity=".5"/><ellipse cx="420" cy="452" rx="40" ry="6" fill="#a9c3e6" opacity=".7"/></g>
<g filter="url(#b8)"><ellipse cx="18" cy="262" rx="62" ry="46" fill="#9dadd2"/><ellipse cx="150" cy="254" rx="104" ry="38" fill="#9caccf"/></g>
<g filter="url(#b4)"><ellipse cx="10" cy="232" rx="46" ry="46" fill="#d9e1f3"/><ellipse cx="30" cy="258" rx="44" ry="30" fill="#d3dcf0"/><ellipse cx="138" cy="234" rx="98" ry="33" fill="#d8e0f3"/><ellipse cx="150" cy="228" rx="62" ry="20" fill="#e5ebf8"/><ellipse cx="80" cy="212" rx="40" ry="16" fill="#e4eaf7"/><ellipse cx="215" cy="240" rx="32" ry="24" fill="#d6dff2"/></g><g filter="url(#b8)"><ellipse cx="150" cy="266" rx="78" ry="10" fill="#bcc9e6" opacity=".8"/><ellipse cx="20" cy="290" rx="44" ry="8" fill="#aab9dc" opacity=".8"/></g>
<rect x="0" y="470" width="260" height="70" fill="#2c4529"/>
<rect x="200" y="468" width="251" height="340" fill="url(#sea)"/>
<rect x="372" y="470" width="79" height="7" fill="#2d5879"/>
<path d="M34 429l14 1 20 2 16-3 15-3 20-1 31-1 38 1 20-4 10-4 16-3 10 .700 10 13 24 14 30 14 30 8 40 7v12H34z" fill="url(#mt)"/>
<path d="M234 414l10 .700 10 13 24 14 30 14-20-4-22-12-18-14z" fill="#6b5848" opacity=".6"/>
<path d="M150 424l38 1 20-4 10-4 16-3-8 12-20 10-30 6-26-2z" fill="#3f342c" opacity=".5"/>
<path d="M222 464l30-3 36 3 45 3 45 4 36 3 37 2v18l-40 2-50 3-50 4-34 8-40 10-20 6z" fill="#35512f"/>
<path d="M222 480l66-8 90 2 73 4v14l-90 4-84 6-55 12z" fill="#2c4729" opacity=".8"/>
<rect x="439" y="468" width="12" height="10" fill="#e6e8e8"/>
<path d="M200 528l30-7 24-9 30-11 64-5 103-6v3l-100 7-62 6-28 11-26 10-33 6z" fill="#d9ceb8"/>
<path d="M254 509l30-9 30-2-20 6-24 9-20 8-10-2z" fill="#9aa0a0" opacity=".55"/>
<path d="M356 504l-60 27" stroke="#1f3a48" stroke-width="2.200"/><path d="M258 515.500l54 2.500" stroke="#22404e" stroke-width="1.600"/><path d="M338 500l22 2" stroke="#2a2a2a" stroke-width="2.500"/><path d="M296 531l-26 14" stroke="#2b5e74" stroke-width="1.500" opacity=".7"/>
<path d="M348.6 545.6h29.5" stroke="#3a93b2" stroke-width="1.200" opacity=".55"/>
<path d="M423.2 536h27.5" stroke="#59b6d0" stroke-width="1.200" opacity=".55"/>
<path d="M305.6 593.7h12.1" stroke="#3a93b2" stroke-width="1.200" opacity=".55"/>
<path d="M382.7 530h27" stroke="#59b6d0" stroke-width="1.200" opacity=".55"/>
<path d="M394.6 619.1h11.9" stroke="#6fc2d6" stroke-width="1.200" opacity=".55"/>
<path d="M307.4 557.6h26.7" stroke="#59b6d0" stroke-width="1.200" opacity=".55"/>
<path d="M343.4 544.5h13.5" stroke="#3f9ab8" stroke-width="1.200" opacity=".55"/>
<path d="M384 635.9h13.1" stroke="#59b6d0" stroke-width="1.200" opacity=".55"/>
<path d="M355.9 613.1h11.9" stroke="#3a93b2" stroke-width="1.200" opacity=".55"/>
<path d="M392.9 604.4h26" stroke="#3f9ab8" stroke-width="1.200" opacity=".55"/>
<path d="M369.8 677h20.8" stroke="#59b6d0" stroke-width="1.200" opacity=".55"/>
<path d="M419.2 638.8h17.3" stroke="#3f9ab8" stroke-width="1.200" opacity=".55"/>
<path d="M378.8 668.8h31.9" stroke="#3f9ab8" stroke-width="1.200" opacity=".55"/>
<path d="M391.3 532.4h25.4" stroke="#59b6d0" stroke-width="1.200" opacity=".55"/>
<path d="M413.6 545.8h24.7" stroke="#3a93b2" stroke-width="1.200" opacity=".55"/>
<path d="M444.3 533.2h26.7" stroke="#3f9ab8" stroke-width="1.200" opacity=".55"/>
<path d="M351 579.5h24.9" stroke="#6fc2d6" stroke-width="1.200" opacity=".55"/>
<path d="M310.3 535.9h18.1" stroke="#3a93b2" stroke-width="1.200" opacity=".55"/>
<path d="M309.1 639.3h29.4" stroke="#6fc2d6" stroke-width="1.200" opacity=".55"/>
<path d="M342.7 585.6h30.1" stroke="#3a93b2" stroke-width="1.200" opacity=".55"/>
<path d="M441.1 580.4h28.3" stroke="#6fc2d6" stroke-width="1.200" opacity=".55"/>
<path d="M308.8 650.6h13.9" stroke="#59b6d0" stroke-width="1.200" opacity=".55"/>
<path d="M359.7 675.9h24.9" stroke="#59b6d0" stroke-width="1.200" opacity=".55"/>
<path d="M367.4 613.4h36.5" stroke="#6fc2d6" stroke-width="1.200" opacity=".55"/>
<path d="M429.6 567.3h22.5" stroke="#3f9ab8" stroke-width="1.200" opacity=".55"/>
<path d="M402.4 584.7h16.9" stroke="#3a93b2" stroke-width="1.200" opacity=".55"/>
<rect x="340.9" y="577.1" width="1.600" height="1.200" fill="#1d3c4c" opacity=".8"/>
<rect x="341.7" y="585.1" width="1.600" height="1.200" fill="#1d3c4c" opacity=".8"/>
<rect x="372.5" y="599.1" width="1.600" height="1.200" fill="#23485a" opacity=".8"/>
<rect x="359.4" y="560.1" width="1.600" height="1.200" fill="#23485a" opacity=".8"/>
<rect x="441.5" y="644.8" width="1.600" height="1.200" fill="#23485a" opacity=".8"/>
<rect x="419.4" y="679.9" width="1.600" height="1.200" fill="#23485a" opacity=".8"/>
<rect x="369" y="603.8" width="1.600" height="1.200" fill="#1d3c4c" opacity=".8"/>
<rect x="380.6" y="604.1" width="1.600" height="1.200" fill="#1d3c4c" opacity=".8"/>
<rect x="326.8" y="573.4" width="1.600" height="1.200" fill="#1d3c4c" opacity=".8"/>
<rect x="332.3" y="636.1" width="1.600" height="1.200" fill="#1d3c4c" opacity=".8"/>
<rect x="318" y="564.2" width="1.600" height="1.200" fill="#1d3c4c" opacity=".8"/>
<rect x="441.4" y="638.2" width="1.600" height="1.200" fill="#1d3c4c" opacity=".8"/>
<rect x="431.7" y="638.3" width="1.600" height="1.200" fill="#1d3c4c" opacity=".8"/>
<rect x="396.3" y="615.9" width="1.600" height="1.200" fill="#1d3c4c" opacity=".8"/>
<rect x="428.4" y="698.9" width="1.600" height="1.200" fill="#e8f2f6" opacity=".8"/>
<rect x="380.5" y="589.9" width="1.600" height="1.200" fill="#1d3c4c" opacity=".8"/>
<rect x="331.3" y="594.8" width="1.600" height="1.200" fill="#e8f2f6" opacity=".8"/>
<rect x="380.2" y="650.7" width="1.600" height="1.200" fill="#23485a" opacity=".8"/>
<rect x="386.7" y="563.5" width="1.600" height="1.200" fill="#23485a" opacity=".8"/>
<rect x="436.8" y="661.3" width="1.600" height="1.200" fill="#e8f2f6" opacity=".8"/>
<rect x="445.2" y="678.1" width="1.600" height="1.200" fill="#23485a" opacity=".8"/>
<rect x="427.9" y="622.9" width="1.600" height="1.200" fill="#1d3c4c" opacity=".8"/>
<rect x="364.2" y="575.6" width="1.600" height="1.200" fill="#23485a" opacity=".8"/>
<rect x="419.3" y="592.7" width="1.600" height="1.200" fill="#1d3c4c" opacity=".8"/>
<rect x="397.7" y="666.1" width="1.600" height="1.200" fill="#1d3c4c" opacity=".8"/>
<rect x="422.8" y="670.9" width="1.600" height="1.200" fill="#23485a" opacity=".8"/>
<rect x="422.4" y="572" width="1.600" height="1.200" fill="#e8f2f6" opacity=".8"/>
<rect x="364.2" y="544.6" width="1.600" height="1.200" fill="#1d3c4c" opacity=".8"/>
<rect x="420.7" y="615.6" width="1.600" height="1.200" fill="#1d3c4c" opacity=".8"/>
<rect x="408" y="693" width="1.600" height="1.200" fill="#e8f2f6" opacity=".8"/>
<rect x="423.1" y="655.7" width="1.600" height="1.200" fill="#e8f2f6" opacity=".8"/>
<rect x="442.2" y="598.3" width="1.600" height="1.200" fill="#1d3c4c" opacity=".8"/>
<rect x="331.3" y="615.2" width="1.600" height="1.200" fill="#e8f2f6" opacity=".8"/>
<rect x="344.6" y="639.9" width="1.600" height="1.200" fill="#23485a" opacity=".8"/>
<rect x="427.3" y="616.7" width="1.600" height="1.200" fill="#23485a" opacity=".8"/>
<rect x="362.7" y="642.9" width="1.600" height="1.200" fill="#23485a" opacity=".8"/>
<rect x="0" y="327" width="27" height="130" fill="#dcc091"/>
<rect x="0" y="327" width="9" height="130" fill="#e6cc9e"/>
<rect x="11" y="331" width="15" height="1.800" fill="#6d5a42" opacity=".75"/>
<rect x="1" y="331" width="6" height="1.600" fill="#8f7856" opacity=".55"/>
<rect x="11" y="335" width="15" height="1.800" fill="#6d5a42" opacity=".75"/>
<rect x="1" y="335" width="6" height="1.600" fill="#8f7856" opacity=".55"/>
<rect x="11" y="339" width="15" height="1.800" fill="#6d5a42" opacity=".75"/>
<rect x="1" y="339" width="6" height="1.600" fill="#8f7856" opacity=".55"/>
<rect x="11" y="343" width="15" height="1.800" fill="#6d5a42" opacity=".75"/>
<rect x="1" y="343" width="6" height="1.600" fill="#8f7856" opacity=".55"/>
<rect x="11" y="347" width="15" height="1.800" fill="#6d5a42" opacity=".75"/>
<rect x="1" y="347" width="6" height="1.600" fill="#8f7856" opacity=".55"/>
<rect x="11" y="351" width="15" height="1.800" fill="#6d5a42" opacity=".75"/>
<rect x="1" y="351" width="6" height="1.600" fill="#8f7856" opacity=".55"/>
<rect x="11" y="355" width="15" height="1.800" fill="#6d5a42" opacity=".75"/>
<rect x="1" y="355" width="6" height="1.600" fill="#8f7856" opacity=".55"/>
<rect x="11" y="359" width="15" height="1.800" fill="#6d5a42" opacity=".75"/>
<rect x="1" y="359" width="6" height="1.600" fill="#8f7856" opacity=".55"/>
<rect x="11" y="363" width="15" height="1.800" fill="#6d5a42" opacity=".75"/>
<rect x="1" y="363" width="6" height="1.600" fill="#8f7856" opacity=".55"/>
<rect x="11" y="367" width="15" height="1.800" fill="#6d5a42" opacity=".75"/>
<rect x="1" y="367" width="6" height="1.600" fill="#8f7856" opacity=".55"/>
<rect x="11" y="371" width="15" height="1.800" fill="#6d5a42" opacity=".75"/>
<rect x="1" y="371" width="6" height="1.600" fill="#8f7856" opacity=".55"/>
<rect x="11" y="375" width="15" height="1.800" fill="#6d5a42" opacity=".75"/>
<rect x="1" y="375" width="6" height="1.600" fill="#8f7856" opacity=".55"/>
<rect x="11" y="379" width="15" height="1.800" fill="#6d5a42" opacity=".75"/>
<rect x="1" y="379" width="6" height="1.600" fill="#8f7856" opacity=".55"/>
<rect x="11" y="383" width="15" height="1.800" fill="#6d5a42" opacity=".75"/>
<rect x="1" y="383" width="6" height="1.600" fill="#8f7856" opacity=".55"/>
<rect x="11" y="387" width="15" height="1.800" fill="#6d5a42" opacity=".75"/>
<rect x="1" y="387" width="6" height="1.600" fill="#8f7856" opacity=".55"/>
<rect x="11" y="391" width="15" height="1.800" fill="#6d5a42" opacity=".75"/>
<rect x="1" y="391" width="6" height="1.600" fill="#8f7856" opacity=".55"/>
<rect x="11" y="395" width="15" height="1.800" fill="#6d5a42" opacity=".75"/>
<rect x="1" y="395" width="6" height="1.600" fill="#8f7856" opacity=".55"/>
<rect x="11" y="399" width="15" height="1.800" fill="#6d5a42" opacity=".75"/>
<rect x="1" y="399" width="6" height="1.600" fill="#8f7856" opacity=".55"/>
<rect x="11" y="403" width="15" height="1.800" fill="#6d5a42" opacity=".75"/>
<rect x="1" y="403" width="6" height="1.600" fill="#8f7856" opacity=".55"/>
<rect x="11" y="407" width="15" height="1.800" fill="#6d5a42" opacity=".75"/>
<rect x="1" y="407" width="6" height="1.600" fill="#8f7856" opacity=".55"/>
<rect x="11" y="411" width="15" height="1.800" fill="#6d5a42" opacity=".75"/>
<rect x="1" y="411" width="6" height="1.600" fill="#8f7856" opacity=".55"/>
<rect x="11" y="415" width="15" height="1.800" fill="#6d5a42" opacity=".75"/>
<rect x="1" y="415" width="6" height="1.600" fill="#8f7856" opacity=".55"/>
<rect x="11" y="419" width="15" height="1.800" fill="#6d5a42" opacity=".75"/>
<rect x="1" y="419" width="6" height="1.600" fill="#8f7856" opacity=".55"/>
<rect x="11" y="423" width="15" height="1.800" fill="#6d5a42" opacity=".75"/>
<rect x="1" y="423" width="6" height="1.600" fill="#8f7856" opacity=".55"/>
<rect x="11" y="427" width="15" height="1.800" fill="#6d5a42" opacity=".75"/>
<rect x="1" y="427" width="6" height="1.600" fill="#8f7856" opacity=".55"/>
<rect x="11" y="431" width="15" height="1.800" fill="#6d5a42" opacity=".75"/>
<rect x="1" y="431" width="6" height="1.600" fill="#8f7856" opacity=".55"/>
<rect x="11" y="435" width="15" height="1.800" fill="#6d5a42" opacity=".75"/>
<rect x="1" y="435" width="6" height="1.600" fill="#8f7856" opacity=".55"/>
<rect x="11" y="439" width="15" height="1.800" fill="#6d5a42" opacity=".75"/>
<rect x="1" y="439" width="6" height="1.600" fill="#8f7856" opacity=".55"/>
<rect x="11" y="443" width="15" height="1.800" fill="#6d5a42" opacity=".75"/>
<rect x="1" y="443" width="6" height="1.600" fill="#8f7856" opacity=".55"/>
<rect x="11" y="447" width="15" height="1.800" fill="#6d5a42" opacity=".75"/>
<rect x="1" y="447" width="6" height="1.600" fill="#8f7856" opacity=".55"/>
<rect x="11" y="451" width="15" height="1.800" fill="#6d5a42" opacity=".75"/>
<rect x="1" y="451" width="6" height="1.600" fill="#8f7856" opacity=".55"/>
<rect x="11" y="455" width="15" height="1.800" fill="#6d5a42" opacity=".75"/>
<rect x="1" y="455" width="6" height="1.600" fill="#8f7856" opacity=".55"/>
<rect x="0" y="455" width="27" height="37" fill="#c9ae84"/><rect x="0" y="458" width="4" height="34" fill="#2b2a2c"/><rect x="12" y="456" width="11" height="36" fill="#2e2d30"/>
<rect x="24" y="393" width="11" height="56" fill="#e9e9e7"/><rect x="24" y="393" width="3.500" height="56" fill="#a9a9a6"/>
<rect x="24" y="444" width="90" height="50" fill="#d2d2ce"/>
<rect x="50" y="448" width="32" height="44" fill="#8f918e"/>
<rect x="50" y="450" width="32" height="1.500" fill="#d8d8d4"/>
<rect x="50" y="454" width="32" height="1.500" fill="#d8d8d4"/>
<rect x="50" y="458" width="32" height="1.500" fill="#d8d8d4"/>
<rect x="50" y="462" width="32" height="1.500" fill="#d8d8d4"/>
<rect x="50" y="466" width="32" height="1.500" fill="#d8d8d4"/>
<rect x="50" y="470" width="32" height="1.500" fill="#d8d8d4"/>
<rect x="50" y="474" width="32" height="1.500" fill="#d8d8d4"/>
<rect x="50" y="478" width="32" height="1.500" fill="#d8d8d4"/>
<rect x="50" y="482" width="32" height="1.500" fill="#d8d8d4"/>
<rect x="50" y="486" width="32" height="1.500" fill="#d8d8d4"/>
<rect x="50" y="490" width="32" height="1.500" fill="#d8d8d4"/>
<rect x="54" y="448" width="1" height="44" fill="#d8d8d4"/>
<rect x="59" y="448" width="1" height="44" fill="#d8d8d4"/>
<rect x="64" y="448" width="1" height="44" fill="#d8d8d4"/>
<rect x="69" y="448" width="1" height="44" fill="#d8d8d4"/>
<rect x="74" y="448" width="1" height="44" fill="#d8d8d4"/>
<rect x="79" y="448" width="1" height="44" fill="#d8d8d4"/>
<rect x="82" y="447" width="16" height="46" fill="#dededa"/><rect x="98" y="448" width="13" height="44" fill="#a7a8a5"/>
<rect x="98" y="451" width="13" height="1.500" fill="#e3e3df"/>
<rect x="98" y="455" width="13" height="1.500" fill="#e3e3df"/>
<rect x="98" y="459" width="13" height="1.500" fill="#e3e3df"/>
<rect x="98" y="463" width="13" height="1.500" fill="#e3e3df"/>
<rect x="98" y="467" width="13" height="1.500" fill="#e3e3df"/>
<rect x="98" y="471" width="13" height="1.500" fill="#e3e3df"/>
<rect x="98" y="475" width="13" height="1.500" fill="#e3e3df"/>
<rect x="98" y="479" width="13" height="1.500" fill="#e3e3df"/>
<rect x="98" y="483" width="13" height="1.500" fill="#e3e3df"/>
<rect x="98" y="487" width="13" height="1.500" fill="#e3e3df"/>
<rect x="98" y="491" width="13" height="1.500" fill="#e3e3df"/>
<rect x="26" y="452" width="24" height="40" fill="#b9bab6"/>
<rect x="26" y="455" width="24" height="2" fill="#e5e5e1"/>
<rect x="26" y="460" width="24" height="2" fill="#e5e5e1"/>
<rect x="26" y="465" width="24" height="2" fill="#e5e5e1"/>
<rect x="26" y="470" width="24" height="2" fill="#e5e5e1"/>
<rect x="26" y="475" width="24" height="2" fill="#e5e5e1"/>
<rect x="26" y="480" width="24" height="2" fill="#e5e5e1"/>
<rect x="26" y="485" width="24" height="2" fill="#e5e5e1"/>
<rect x="26" y="490" width="24" height="2" fill="#e5e5e1"/>
<rect x="24" y="441" width="30" height="4" fill="#e6e6e3"/><rect x="78" y="440" width="18" height="5" fill="#e6e6e3"/>
<rect x="109" y="407" width="20" height="8" fill="#eceadf"/>
<rect x="100" y="415" width="50" height="87" fill="#e9e7df"/>
<rect x="111" y="419" width="39" height="1.300" fill="#8a8a86" opacity=".8"/>
<rect x="111" y="422" width="39" height="1.300" fill="#8a8a86" opacity=".8"/>
<rect x="111" y="425" width="39" height="1.300" fill="#8a8a86" opacity=".8"/>
<rect x="111" y="428" width="39" height="1.300" fill="#8a8a86" opacity=".8"/>
<rect x="111" y="431" width="39" height="1.300" fill="#8a8a86" opacity=".8"/>
<rect x="111" y="434" width="39" height="1.300" fill="#8a8a86" opacity=".8"/>
<rect x="111" y="437" width="39" height="1.300" fill="#8a8a86" opacity=".8"/>
<rect x="111" y="440" width="39" height="1.300" fill="#8a8a86" opacity=".8"/>
<rect x="111" y="443" width="39" height="1.300" fill="#8a8a86" opacity=".8"/>
<rect x="111" y="446" width="39" height="1.300" fill="#8a8a86" opacity=".8"/>
<rect x="111" y="449" width="39" height="1.300" fill="#8a8a86" opacity=".8"/>
<rect x="111" y="452" width="39" height="1.300" fill="#8a8a86" opacity=".8"/>
<rect x="111" y="455" width="39" height="1.300" fill="#8a8a86" opacity=".8"/>
<rect x="111" y="458" width="39" height="1.300" fill="#8a8a86" opacity=".8"/>
<rect x="111" y="461" width="39" height="1.300" fill="#8a8a86" opacity=".8"/>
<rect x="111" y="464" width="39" height="1.300" fill="#8a8a86" opacity=".8"/>
<rect x="111" y="467" width="39" height="1.300" fill="#8a8a86" opacity=".8"/>
<rect x="111" y="470" width="39" height="1.300" fill="#8a8a86" opacity=".8"/>
<rect x="111" y="473" width="39" height="1.300" fill="#8a8a86" opacity=".8"/>
<rect x="111" y="476" width="39" height="1.300" fill="#8a8a86" opacity=".8"/>
<rect x="111" y="479" width="39" height="1.300" fill="#8a8a86" opacity=".8"/>
<rect x="111" y="482" width="39" height="1.300" fill="#8a8a86" opacity=".8"/>
<rect x="111" y="485" width="39" height="1.300" fill="#8a8a86" opacity=".8"/>
<rect x="111" y="488" width="39" height="1.300" fill="#8a8a86" opacity=".8"/>
<rect x="111" y="491" width="39" height="1.300" fill="#8a8a86" opacity=".8"/>
<rect x="111" y="494" width="39" height="1.300" fill="#8a8a86" opacity=".8"/>
<rect x="111" y="497" width="39" height="1.300" fill="#8a8a86" opacity=".8"/>
<rect x="100" y="415" width="11" height="87" fill="#efeee6"/>
<rect x="102" y="420" width="7" height="1.500" fill="#a5a49c" opacity=".7"/>
<rect x="102" y="424" width="7" height="1.500" fill="#a5a49c" opacity=".7"/>
<rect x="102" y="428" width="7" height="1.500" fill="#a5a49c" opacity=".7"/>
<rect x="102" y="432" width="7" height="1.500" fill="#a5a49c" opacity=".7"/>
<rect x="102" y="436" width="7" height="1.500" fill="#a5a49c" opacity=".7"/>
<rect x="102" y="440" width="7" height="1.500" fill="#a5a49c" opacity=".7"/>
<rect x="102" y="444" width="7" height="1.500" fill="#a5a49c" opacity=".7"/>
<rect x="102" y="448" width="7" height="1.500" fill="#a5a49c" opacity=".7"/>
<rect x="102" y="452" width="7" height="1.500" fill="#a5a49c" opacity=".7"/>
<rect x="102" y="456" width="7" height="1.500" fill="#a5a49c" opacity=".7"/>
<rect x="102" y="460" width="7" height="1.500" fill="#a5a49c" opacity=".7"/>
<rect x="102" y="464" width="7" height="1.500" fill="#a5a49c" opacity=".7"/>
<rect x="102" y="468" width="7" height="1.500" fill="#a5a49c" opacity=".7"/>
<rect x="102" y="472" width="7" height="1.500" fill="#a5a49c" opacity=".7"/>
<rect x="102" y="476" width="7" height="1.500" fill="#a5a49c" opacity=".7"/>
<rect x="102" y="480" width="7" height="1.500" fill="#a5a49c" opacity=".7"/>
<rect x="102" y="484" width="7" height="1.500" fill="#a5a49c" opacity=".7"/>
<rect x="102" y="488" width="7" height="1.500" fill="#a5a49c" opacity=".7"/>
<rect x="102" y="492" width="7" height="1.500" fill="#a5a49c" opacity=".7"/>
<rect x="102" y="496" width="7" height="1.500" fill="#a5a49c" opacity=".7"/>
<rect x="150" y="429" width="43" height="64" fill="#f1efe9"/><rect x="152" y="432" width="36" height="60" fill="#4f4b48"/>
<rect x="152" y="435" width="36" height="1.200" fill="#bdb8ae" opacity=".8"/>
<rect x="152" y="439" width="36" height="1.200" fill="#bdb8ae" opacity=".8"/>
<rect x="152" y="443" width="36" height="1.200" fill="#bdb8ae" opacity=".8"/>
<rect x="152" y="447" width="36" height="1.200" fill="#bdb8ae" opacity=".8"/>
<rect x="152" y="451" width="36" height="1.200" fill="#bdb8ae" opacity=".8"/>
<rect x="152" y="455" width="36" height="1.200" fill="#bdb8ae" opacity=".8"/>
<rect x="152" y="459" width="36" height="1.200" fill="#bdb8ae" opacity=".8"/>
<rect x="152" y="463" width="36" height="1.200" fill="#bdb8ae" opacity=".8"/>
<rect x="152" y="467" width="36" height="1.200" fill="#bdb8ae" opacity=".8"/>
<rect x="152" y="471" width="36" height="1.200" fill="#bdb8ae" opacity=".8"/>
<rect x="152" y="475" width="36" height="1.200" fill="#bdb8ae" opacity=".8"/>
<rect x="152" y="479" width="36" height="1.200" fill="#bdb8ae" opacity=".8"/>
<rect x="152" y="483" width="36" height="1.200" fill="#bdb8ae" opacity=".8"/>
<rect x="152" y="487" width="36" height="1.200" fill="#bdb8ae" opacity=".8"/>
<rect x="152" y="491" width="36" height="1.200" fill="#bdb8ae" opacity=".8"/>
<rect x="155" y="432" width="1" height="60" fill="#c9c4ba" opacity=".8"/>
<rect x="159" y="432" width="1" height="60" fill="#c9c4ba" opacity=".8"/>
<rect x="163" y="432" width="1" height="60" fill="#c9c4ba" opacity=".8"/>
<rect x="167" y="432" width="1" height="60" fill="#c9c4ba" opacity=".8"/>
<rect x="171" y="432" width="1" height="60" fill="#c9c4ba" opacity=".8"/>
<rect x="175" y="432" width="1" height="60" fill="#c9c4ba" opacity=".8"/>
<rect x="179" y="432" width="1" height="60" fill="#c9c4ba" opacity=".8"/>
<rect x="183" y="432" width="1" height="60" fill="#c9c4ba" opacity=".8"/>
<rect x="187" y="432" width="1" height="60" fill="#c9c4ba" opacity=".8"/>
<rect x="193" y="434" width="22" height="56" fill="#d9d6cc"/><rect x="195" y="438" width="17" height="50" fill="#6f6b66"/>
<rect x="195" y="441" width="17" height="1.300" fill="#cfcbc0"/>
<rect x="195" y="445" width="17" height="1.300" fill="#cfcbc0"/>
<rect x="195" y="449" width="17" height="1.300" fill="#cfcbc0"/>
<rect x="195" y="453" width="17" height="1.300" fill="#cfcbc0"/>
<rect x="195" y="457" width="17" height="1.300" fill="#cfcbc0"/>
<rect x="195" y="461" width="17" height="1.300" fill="#cfcbc0"/>
<rect x="195" y="465" width="17" height="1.300" fill="#cfcbc0"/>
<rect x="195" y="469" width="17" height="1.300" fill="#cfcbc0"/>
<rect x="195" y="473" width="17" height="1.300" fill="#cfcbc0"/>
<rect x="195" y="477" width="17" height="1.300" fill="#cfcbc0"/>
<rect x="195" y="481" width="17" height="1.300" fill="#cfcbc0"/>
<rect x="195" y="485" width="17" height="1.300" fill="#cfcbc0"/>
<rect x="196" y="431" width="8" height="4" fill="#e2dfd5"/><rect x="212" y="436" width="8" height="10" fill="#d8d2c2"/>
<rect x="213" y="446" width="15" height="44" fill="#d2c8b2"/><rect x="222" y="448" width="6" height="42" fill="#9f9685"/>
<rect x="146" y="476" width="6" height="24" fill="#bfd0c4"/>
<g filter="url(#lf)"><path d="M84 494c6-8 14-10 22-8 6-3 12 0 16 5 8 1 12 5 16 10l10 2c8-6 18-8 28-4 8-6 16-6 22-2 6-8 14-10 20-6 6-4 12-2 16 2 8-4 16 0 20 6l4 6-16 8-24 10-18 10H90z" fill="#294226"/><path d="M176 498c4-10 10-14 18-12 4-6 12-6 16-2 6-2 12 2 14 8 6 0 10 4 12 8l-20 8-36 2z" fill="#263e23"/></g>
<path d="M0 492h74l26 4v34H0z" fill="#d6d6d3"/><path d="M26 510l66-16 8 4v4l-50 16z" fill="#b8b9b7"/><path d="M0 494l80 0 12 0-66 16H0z" fill="#e4e4e2"/><path d="M30 514l62-16v14l-50 18H30z" fill="#e9e9e6"/><rect x="0" y="500" width="24" height="30" fill="#d0cfc6"/>
<path d="M0 529l254 2 72 50v4l-326-9z" fill="#5a544d"/>
<path d="M254 531l72 50-30-6-60-44z" fill="#4c4741" opacity=".9"/>
<path d="M270 543l24 0 16 12-10 3z" fill="#57514b"/><path d="M294 543l16 12" stroke="#cfcabb" stroke-width="1.200"/>
<path d="M0 534L258 535" stroke="#4b4640" stroke-width=".600" opacity=".7"/>
<path d="M0 537L261 538" stroke="#4b4640" stroke-width=".600" opacity=".7"/>
<path d="M0 540L265 541" stroke="#4b4640" stroke-width=".600" opacity=".7"/>
<path d="M0 543L268 544" stroke="#4b4640" stroke-width=".600" opacity=".7"/>
<path d="M0 546L272 547" stroke="#4b4640" stroke-width=".600" opacity=".7"/>
<path d="M0 549L276 550" stroke="#4b4640" stroke-width=".600" opacity=".7"/>
<path d="M0 552L279 553" stroke="#4b4640" stroke-width=".600" opacity=".7"/>
<path d="M0 555L283 556" stroke="#4b4640" stroke-width=".600" opacity=".7"/>
<path d="M0 558L286 559" stroke="#4b4640" stroke-width=".600" opacity=".7"/>
<path d="M0 561L290 562" stroke="#4b4640" stroke-width=".600" opacity=".7"/>
<path d="M0 564L294 565" stroke="#4b4640" stroke-width=".600" opacity=".7"/>
<path d="M0 567L297 568" stroke="#4b4640" stroke-width=".600" opacity=".7"/>
<path d="M0 570L301 571" stroke="#4b4640" stroke-width=".600" opacity=".7"/>
<path d="M0 573L304 574" stroke="#4b4640" stroke-width=".600" opacity=".7"/>
<path d="M0 529l254 2 72 50" fill="none" stroke="#8c867b" stroke-width="1"/>
<path d="M18 561l22-17 20 15-4 2-16-11-18 13z" fill="#d8d4c4"/><path d="M22 559l18-13 14 11z" fill="#4e4943"/><rect x="27" y="558" width="20" height="10" fill="#ece9dc"/><rect x="29" y="560" width="16" height="6" fill="#9c998f"/><path d="M18 561l6 8h4v-8z" fill="#3d3935" opacity=".6"/>
<path d="M174 561l22-17 20 15-4 2-16-11-18 13z" fill="#d8d4c4"/><path d="M178 559l18-13 14 11z" fill="#4e4943"/><rect x="183" y="558" width="20" height="10" fill="#ece9dc"/><rect x="185" y="560" width="16" height="6" fill="#9c998f"/><path d="M174 561l6 8h4v-8z" fill="#3d3935" opacity=".6"/>
<path d="M0 574l326 9v5l-326-8z" fill="#d9d5c5"/><path d="M0 579.500l326 8.500v2l-326-8z" fill="#8f8a7c" opacity=".7"/>
<path d="M0 582l314 8v160H0z" fill="#c6c5a9"/>
<path d="M314 590l6 4v150h-6z" fill="#d9d8c6"/>
<rect x="0" y="607" width="314" height="3" fill="#d7d6c0"/><rect x="0" y="610" width="314" height="1" fill="#aead93" opacity=".6"/>
<rect x="213" y="588" width="10" height="160" fill="#d6d5bf"/><rect x="305" y="590" width="9" height="160" fill="#dad9c5"/><rect x="29" y="584" width="2" height="165" fill="#b3b297"/><rect x="212" y="588" width="1.200" height="160" fill="#a9a88f"/>
<rect x="5" y="587" width="17" height="18" fill="#eeecdf"/><rect x="7.5" y="589.5" width="12" height="13" fill="#b9b8ad"/><rect x="7.5" y="595.5" width="12" height="1" fill="#eeecdf"/><rect x="13" y="589.5" width="1" height="13" fill="#eeecdf"/>
<rect x="42" y="587" width="17" height="18" fill="#eeecdf"/><rect x="44.5" y="589.5" width="12" height="13" fill="#b9b8ad"/><rect x="44.5" y="595.5" width="12" height="1" fill="#eeecdf"/><rect x="50" y="589.5" width="1" height="13" fill="#eeecdf"/>
<path d="M62.9 605V590.5a6.5 6.5 0 0 1 13 0V605z" fill="#eeecdf"/><path d="M65.4 602.5V590.5a4 4 0 0 1 8 0V602.5z" fill="#b5b4a9"/><rect x="65.4" y="592.5" width="8" height="1" fill="#eeecdf"/><rect x="68.9" y="588" width="1" height="15" fill="#eeecdf"/>
<rect x="78.9" y="587" width="17" height="18" fill="#eeecdf"/><rect x="81.4" y="589.5" width="12" height="13" fill="#b9b8ad"/><rect x="81.4" y="595.5" width="12" height="1" fill="#eeecdf"/><rect x="86.9" y="589.5" width="1" height="13" fill="#eeecdf"/>
<rect x="127.9" y="587" width="17" height="18" fill="#eeecdf"/><rect x="130.4" y="589.5" width="12" height="13" fill="#b9b8ad"/><rect x="130.4" y="595.5" width="12" height="1" fill="#eeecdf"/><rect x="135.9" y="589.5" width="1" height="13" fill="#eeecdf"/>
<path d="M157.9 605V590.5a6.5 6.5 0 0 1 13 0V605z" fill="#eeecdf"/><path d="M160.4 602.5V590.5a4 4 0 0 1 8 0V602.5z" fill="#b5b4a9"/><rect x="160.4" y="592.5" width="8" height="1" fill="#eeecdf"/><rect x="163.9" y="588" width="1" height="15" fill="#eeecdf"/>
<rect x="184.8" y="587" width="16" height="18" fill="#eeecdf"/><rect x="187.3" y="589.5" width="11" height="13" fill="#b9b8ad"/><rect x="187.3" y="595.5" width="11" height="1" fill="#eeecdf"/><rect x="192.3" y="589.5" width="1" height="13" fill="#eeecdf"/>
<rect x="235.8" y="587" width="17" height="18" fill="#eeecdf"/><rect x="238.3" y="589.5" width="12" height="13" fill="#b9b8ad"/><rect x="238.3" y="595.5" width="12" height="1" fill="#eeecdf"/><rect x="243.8" y="589.5" width="1" height="13" fill="#eeecdf"/>
<path d="M257.8 605V590.5a6.5 6.5 0 0 1 13 0V605z" fill="#eeecdf"/><path d="M260.3 602.5V590.5a4 4 0 0 1 8 0V602.5z" fill="#b5b4a9"/><rect x="260.3" y="592.5" width="8" height="1" fill="#eeecdf"/><rect x="263.8" y="588" width="1" height="15" fill="#eeecdf"/>
<rect x="275.8" y="587" width="17" height="18" fill="#eeecdf"/><rect x="278.3" y="589.5" width="12" height="13" fill="#b9b8ad"/><rect x="278.3" y="595.5" width="12" height="1" fill="#eeecdf"/><rect x="283.8" y="589.5" width="1" height="13" fill="#eeecdf"/>
<path d="M5 642.3V627.1a7.5 7.5 0 0 1 15 0V642.3z" fill="#eeecdf"/><path d="M7.5 639.8V627.1a5 5 0 0 1 10 0V639.8z" fill="#b5b4a9"/><rect x="7.5" y="629.1" width="10" height="1" fill="#eeecdf"/><rect x="12" y="623.6" width="1" height="16.8" fill="#eeecdf"/>
<path d="M41 642.3V627.6a8 8 0 0 1 16 0V642.3z" fill="#eeecdf"/><path d="M43.5 639.8V627.6a5.5 5.5 0 0 1 11 0V639.8z" fill="#b5b4a9"/><rect x="43.5" y="629.6" width="11" height="1" fill="#eeecdf"/><rect x="48.5" y="623.6" width="1" height="16.8" fill="#eeecdf"/>
<rect x="60.9" y="618" width="13" height="21" fill="#eeecdf"/><rect x="63.4" y="620.5" width="8" height="16" fill="#b9b8ad"/><rect x="63.4" y="628" width="8" height="1" fill="#eeecdf"/><rect x="66.9" y="620.5" width="1" height="16" fill="#eeecdf"/>
<path d="M77.9 642.3V628.1a8.5 8.5 0 0 1 17 0V642.3z" fill="#eeecdf"/><path d="M80.4 639.8V628.1a6 6 0 0 1 12 0V639.8z" fill="#b5b4a9"/><rect x="80.4" y="630.1" width="12" height="1" fill="#eeecdf"/><rect x="85.9" y="623.6" width="1" height="16.8" fill="#eeecdf"/>
<path d="M126.9 642.3V627.6a8 8 0 0 1 16 0V642.3z" fill="#eeecdf"/><path d="M129.4 639.8V627.6a5.5 5.5 0 0 1 11 0V639.8z" fill="#b5b4a9"/><rect x="129.4" y="629.6" width="11" height="1" fill="#eeecdf"/><rect x="134.4" y="623.6" width="1" height="16.8" fill="#eeecdf"/>
<rect x="156.9" y="618" width="13" height="21" fill="#eeecdf"/><rect x="159.4" y="620.5" width="8" height="16" fill="#b9b8ad"/><rect x="159.4" y="628" width="8" height="1" fill="#eeecdf"/><rect x="162.9" y="620.5" width="1" height="16" fill="#eeecdf"/>
<path d="M183.8 642.3V627.6a8 8 0 0 1 16 0V642.3z" fill="#eeecdf"/><path d="M186.3 639.8V627.6a5.5 5.5 0 0 1 11 0V639.8z" fill="#b5b4a9"/><rect x="186.3" y="629.6" width="11" height="1" fill="#eeecdf"/><rect x="191.3" y="623.6" width="1" height="16.8" fill="#eeecdf"/>
<path d="M235.8 642.3V627.6a8 8 0 0 1 16 0V642.3z" fill="#eeecdf"/><path d="M238.3 639.8V627.6a5.5 5.5 0 0 1 11 0V639.8z" fill="#b5b4a9"/><rect x="238.3" y="629.6" width="11" height="1" fill="#eeecdf"/><rect x="243.3" y="623.6" width="1" height="16.8" fill="#eeecdf"/>
<rect x="257.8" y="618" width="13" height="21" fill="#eeecdf"/><rect x="260.3" y="620.5" width="8" height="16" fill="#b9b8ad"/><rect x="260.3" y="628" width="8" height="1" fill="#eeecdf"/><rect x="263.8" y="620.5" width="1" height="16" fill="#eeecdf"/>
<path d="M275.8 642.3V628.1a8.5 8.5 0 0 1 17 0V642.3z" fill="#eeecdf"/><path d="M278.3 639.8V628.1a6 6 0 0 1 12 0V639.8z" fill="#b5b4a9"/><rect x="278.3" y="630.1" width="12" height="1" fill="#eeecdf"/><rect x="283.8" y="623.6" width="1" height="16.8" fill="#eeecdf"/>
<rect x="2" y="654.3" width="13" height="23.2" fill="#eeecdf"/><rect x="4.5" y="656.8" width="8" height="18.2" fill="#b9b8ad"/><rect x="4.5" y="665.4" width="8" height="1" fill="#eeecdf"/><rect x="8" y="656.8" width="1" height="18.2" fill="#eeecdf"/>
<rect x="39" y="654.3" width="17" height="23.2" fill="#eeecdf"/><rect x="41.5" y="656.8" width="12" height="18.2" fill="#b9b8ad"/><rect x="41.5" y="665.4" width="12" height="1" fill="#eeecdf"/><rect x="47" y="656.8" width="1" height="18.2" fill="#eeecdf"/>
<rect x="59.9" y="654.3" width="13" height="23.2" fill="#eeecdf"/><rect x="62.4" y="656.8" width="8" height="18.2" fill="#b9b8ad"/><rect x="62.4" y="665.4" width="8" height="1" fill="#eeecdf"/><rect x="65.9" y="656.8" width="1" height="18.2" fill="#eeecdf"/>
<rect x="75.9" y="654.3" width="17" height="23.2" fill="#eeecdf"/><rect x="78.4" y="656.8" width="12" height="18.2" fill="#b9b8ad"/><rect x="78.4" y="665.4" width="12" height="1" fill="#eeecdf"/><rect x="83.9" y="656.8" width="1" height="18.2" fill="#eeecdf"/>
<rect x="125.9" y="654.3" width="17" height="23.2" fill="#eeecdf"/><rect x="128.4" y="656.8" width="12" height="18.2" fill="#b9b8ad"/><rect x="128.4" y="665.4" width="12" height="1" fill="#eeecdf"/><rect x="133.9" y="656.8" width="1" height="18.2" fill="#eeecdf"/>
<rect x="156.9" y="654.3" width="12" height="23.2" fill="#eeecdf"/><rect x="159.4" y="656.8" width="7" height="18.2" fill="#b9b8ad"/><rect x="159.4" y="665.4" width="7" height="1" fill="#eeecdf"/><rect x="162.4" y="656.8" width="1" height="18.2" fill="#eeecdf"/>
<rect x="183.8" y="654.3" width="16" height="23.2" fill="#eeecdf"/><rect x="186.3" y="656.8" width="11" height="18.2" fill="#b9b8ad"/><rect x="186.3" y="665.4" width="11" height="1" fill="#eeecdf"/><rect x="191.3" y="656.8" width="1" height="18.2" fill="#eeecdf"/>
<rect x="235.8" y="654.3" width="16" height="23.2" fill="#eeecdf"/><rect x="238.3" y="656.8" width="11" height="18.2" fill="#3a3a38"/><rect x="238.3" y="665.4" width="11" height="1" fill="#eeecdf"/><rect x="243.3" y="656.8" width="1" height="18.2" fill="#eeecdf"/>
<rect x="257.8" y="654.3" width="13" height="23.2" fill="#eeecdf"/><rect x="260.3" y="656.8" width="8" height="18.2" fill="#b9b8ad"/><rect x="260.3" y="665.4" width="8" height="1" fill="#eeecdf"/><rect x="263.8" y="656.8" width="1" height="18.2" fill="#eeecdf"/>
<rect x="275.8" y="654.3" width="17" height="23.2" fill="#eeecdf"/><rect x="278.3" y="656.8" width="12" height="18.2" fill="#b9b8ad"/><rect x="278.3" y="665.4" width="12" height="1" fill="#eeecdf"/><rect x="283.8" y="656.8" width="1" height="18.2" fill="#eeecdf"/>
<rect x="1" y="689.9" width="14" height="23.6" fill="#eeecdf"/><rect x="3.5" y="692.4" width="9" height="18.6" fill="#b9b8ad"/><rect x="3.5" y="701.2" width="9" height="1" fill="#eeecdf"/><rect x="7.5" y="692.4" width="1" height="18.6" fill="#eeecdf"/>
<rect x="39" y="689.9" width="17" height="23.6" fill="#eeecdf"/><rect x="41.5" y="692.4" width="12" height="18.6" fill="#b9b8ad"/><rect x="41.5" y="701.2" width="12" height="1" fill="#eeecdf"/><rect x="47" y="692.4" width="1" height="18.6" fill="#eeecdf"/>
<rect x="59.9" y="689.9" width="13" height="23.6" fill="#eeecdf"/><rect x="62.4" y="692.4" width="8" height="18.6" fill="#b9b8ad"/><rect x="62.4" y="701.2" width="8" height="1" fill="#eeecdf"/><rect x="65.9" y="692.4" width="1" height="18.6" fill="#eeecdf"/>
<rect x="75.9" y="689.9" width="17" height="23.6" fill="#eeecdf"/><rect x="78.4" y="692.4" width="12" height="18.6" fill="#b9b8ad"/><rect x="78.4" y="701.2" width="12" height="1" fill="#eeecdf"/><rect x="83.9" y="692.4" width="1" height="18.6" fill="#eeecdf"/>
<rect x="125.9" y="689.9" width="17" height="23.6" fill="#eeecdf"/><rect x="128.4" y="692.4" width="12" height="18.6" fill="#b9b8ad"/><rect x="128.4" y="701.2" width="12" height="1" fill="#eeecdf"/><rect x="133.9" y="692.4" width="1" height="18.6" fill="#eeecdf"/>
<rect x="156.9" y="689.9" width="12" height="23.6" fill="#eeecdf"/><rect x="159.4" y="692.4" width="7" height="18.6" fill="#b9b8ad"/><rect x="159.4" y="701.2" width="7" height="1" fill="#eeecdf"/><rect x="162.4" y="692.4" width="1" height="18.6" fill="#eeecdf"/>
<rect x="183.8" y="689.9" width="16" height="23.6" fill="#eeecdf"/><rect x="186.3" y="692.4" width="11" height="18.6" fill="#b9b8ad"/><rect x="186.3" y="701.2" width="11" height="1" fill="#eeecdf"/><rect x="191.3" y="692.4" width="1" height="18.6" fill="#eeecdf"/>
<rect x="235.8" y="689.9" width="16" height="23.6" fill="#eeecdf"/><rect x="238.3" y="692.4" width="11" height="18.6" fill="#b9b8ad"/><rect x="238.3" y="701.2" width="11" height="1" fill="#eeecdf"/><rect x="243.3" y="692.4" width="1" height="18.6" fill="#eeecdf"/>
<rect x="257.8" y="689.9" width="13" height="23.6" fill="#eeecdf"/><rect x="260.3" y="692.4" width="8" height="18.6" fill="#b9b8ad"/><rect x="260.3" y="701.2" width="8" height="1" fill="#eeecdf"/><rect x="263.8" y="692.4" width="1" height="18.6" fill="#eeecdf"/>
<rect x="275.8" y="689.9" width="17" height="23.6" fill="#eeecdf"/><rect x="278.3" y="692.4" width="12" height="18.6" fill="#b9b8ad"/><rect x="278.3" y="701.2" width="12" height="1" fill="#eeecdf"/><rect x="283.8" y="692.4" width="1" height="18.6" fill="#eeecdf"/>
<rect x="1" y="727.9" width="12" height="24" fill="#eeecdf"/><rect x="3.5" y="730.4" width="7" height="19" fill="#b9b8ad"/><rect x="3.5" y="739.4" width="7" height="1" fill="#eeecdf"/><rect x="6.5" y="730.4" width="1" height="19" fill="#eeecdf"/>
<rect x="39" y="727.9" width="17" height="24" fill="#eeecdf"/><rect x="41.5" y="730.4" width="12" height="19" fill="#b9b8ad"/><rect x="41.5" y="739.4" width="12" height="1" fill="#eeecdf"/><rect x="47" y="730.4" width="1" height="19" fill="#eeecdf"/>
<path d="M0 632l18 14-18 36z" fill="#6a655e"/><path d="M0 632l18 14-18 36" fill="none" stroke="#d5d1c2" stroke-width="2"/>
<path d="M314 634l2-10 40 28 50 38 45 32v40H314z" fill="#dccbaa"/>
<path d="M316 624l40 28 50 38 45 32v6l-47-33-50-38-38-26z" fill="#b9ad98"/>
<path d="M318 622l40 28 50 38 45 33" fill="none" stroke="#eef4f4" stroke-width="2.200" opacity=".9"/>
<rect x="330.2" y="675" width="2.200" height="1.600" fill="#c9b28d"/>
<rect x="336.2" y="711" width="2.200" height="1.600" fill="#b2483e"/>
<rect x="326.8" y="725.2" width="2.200" height="1.600" fill="#c9b28d"/>
<rect x="358.4" y="676.1" width="2.200" height="1.600" fill="#8a5b4a"/>
<rect x="331" y="653.6" width="2.200" height="1.600" fill="#efe9dc"/>
<rect x="402.3" y="728.2" width="2.200" height="1.600" fill="#c9b28d"/>
<rect x="399.5" y="705.4" width="2.200" height="1.600" fill="#8a5b4a"/>
<rect x="371.7" y="724" width="2.200" height="1.600" fill="#efe9dc"/>
<rect x="339.7" y="685.1" width="2.200" height="1.600" fill="#4a4a4a"/>
<rect x="351.3" y="689" width="2.200" height="1.600" fill="#3b5d9a"/>
<rect x="324.2" y="706.6" width="2.200" height="1.600" fill="#efe9dc"/>
<rect x="385.6" y="713.4" width="2.200" height="1.600" fill="#4a4a4a"/>
<rect x="360.9" y="722.6" width="2.200" height="1.600" fill="#4a4a4a"/>
<rect x="331.3" y="653.7" width="2.200" height="1.600" fill="#4a4a4a"/>
<rect x="319.9" y="679.6" width="2.200" height="1.600" fill="#3b5d9a"/>
<rect x="380.1" y="709.8" width="2.200" height="1.600" fill="#3b5d9a"/>
<rect x="335.6" y="682.6" width="2.200" height="1.600" fill="#c9b28d"/>
<rect x="367.2" y="709.9" width="2.200" height="1.600" fill="#4a4a4a"/>
<rect x="323.8" y="657.2" width="2.200" height="1.600" fill="#8a5b4a"/>
<rect x="375.3" y="708.4" width="2.200" height="1.600" fill="#8a5b4a"/>
<rect x="363.2" y="695.1" width="2.200" height="1.600" fill="#4a4a4a"/>
<rect x="346.3" y="685.7" width="2.200" height="1.600" fill="#efe9dc"/>
<path d="M360 706l14-8 8 10-16 4z" fill="#2d5fae"/>
<path d="M0 752h120l-30 48H0z" fill="#8f8f8b"/><path d="M0 778l90-12-6 34H0z" fill="#9b9b97"/>
<g filter="url(#lf2)">
<path d="M14 728c10-12 24-14 34-10 6-14 22-18 34-12 4-12 20-16 30-10 4-16 22-22 36-16 6-12 20-14 30-8 2-8 12-10 20-6 4-10 16-10 22-4 8-4 18 0 20 10 12-2 22 6 22 16 14-2 24 6 26 16 12-4 26 0 30 10 10-8 26-6 32 4 12-8 28-4 34 8 10-6 24-2 28 8 8-4 14-2 19 2v94H60c-8-10-12-24-8-36-14-2-26-14-22-30-10-4-18-20-16-36z" fill="#46532f"/>
<path d="M96 800c-6-16 0-30 12-36 4-14 20-20 32-14 10-10 28-8 34 4 14-4 26 4 28 16 12 0 20 10 18 22l-6 8z" fill="#3a4628"/>
<path d="M300 730c6-14 22-18 32-10 8-10 24-8 30 2 12-6 26 0 28 12 12-4 24 2 28 12 10-4 24 0 33 8v56H290c-6-12-6-26 2-36-4-14 0-34 8-44z" fill="#4a5232"/>
<path d="M318 800c-4-20 0-44 12-58 6-14 18-22 30-20 8-8 20-10 28-4 8-10 22-12 30-6 8-8 20-8 26-2 4-4 8-4 11-2v92z" fill="#475030"/>
</g>
<g fill="none" stroke-linecap="round"><path d="M446 722c-2-24-2-44 4-62" stroke="#5b4a34" stroke-width="2.500"/><path d="M452 660c-10-8-20-8-28-2M452 660c-8-12-18-16-26-14M452 660c-4 10-12 18-22 20M452 660c-12 0-22 6-28 14M452 660c0-10-4-16-10-20" stroke="#52742c" stroke-width="5"/><path d="M452 660c-8-2-16 0-22 6M452 662c-6 6-14 12-24 12" stroke="#8fa03a" stroke-width="2.500"/>
<path d="M392 712c-2-8-2-14 0-20" stroke="#5b4a34" stroke-width="2"/><path d="M392 692c-8-4-16-2-22 4M392 692c-4-8-12-10-18-8M392 692c8-6 16-6 22-2M392 692c6 2 10 8 12 14M392 692c-8 2-14 8-16 14" stroke="#4b6a2c" stroke-width="4"/></g>
<path d="M208 656c-2 14 2 30 8 44M222 650c-4 18-2 36 4 52M160 700c8-12 20-22 34-28" fill="none" stroke="#4a4632" stroke-width="1.600" opacity=".8"/>
<g filter="url(#b4)"><ellipse cx="328" cy="766" rx="16" ry="9" fill="#cdbd9f" opacity=".75"/><ellipse cx="412" cy="748" rx="34" ry="24" fill="#5d4c47" opacity=".55"/><ellipse cx="60" cy="770" rx="40" ry="10" fill="#9a9a92" opacity=".5"/></g>
<rect x="130" y="787" width="200" height="13" fill="#10140c" opacity=".4"/>
<rect x="0" y="640" width="451" height="160" fill="url(#bt)"/>
</g>
<circle cx="405.500" cy="45" r="28.700" fill="#fff" fill-opacity=".24"/>
<g transform="translate(392.500 32)"><path d="M2 8.500h5.500L14 2.500v20L7.500 16.500H2z" fill="#fff"/><path d="M17.500 8c1.700 1.300 2.600 3 2.600 4.800s-.900 3.500-2.600 4.800M20.500 4.500c2.800 2.200 4.300 5 4.300 8.300s-1.500 6.100-4.300 8.300" fill="none" stroke="#fff" stroke-width="2.400"/><path d="M1 1l24 24" stroke="#6a82ad" stroke-width="5.500"/><path d="M1.500 .500l24.500 25" stroke="#fff" stroke-width="2.900"/></g>
<clipPath id="mac"><circle cx="34" cy="702" r="20"/></clipPath><g clip-path="url(#mac)"><rect x="14" y="682" width="40" height="40" fill="url(#avs)"/><ellipse cx="30" cy="716" rx="16" ry="5" fill="#e8c9a0"/><ellipse cx="46" cy="713" rx="10" ry="3" fill="#e0d0c0"/><path d="M36 722l2-8 2 4 2-7 2 6 2-4 3 9z" fill="#2a3a3a"/><circle cx="35.500" cy="696.500" r=".900" fill="#fff"/></g>
<text x="57" y="707" font-family="Liberation Sans, sans-serif" font-weight="700" font-size="14" fill="#fff" fill-opacity=".92" textLength="102" lengthAdjust="spacingAndGlyphs">SINIS Instagram</text>
<rect x="165.500" y="683.500" width="118.500" height="36.500" rx="7" fill="none" stroke="#fff" stroke-width="1.200"/>
<text x="224.700" y="708" text-anchor="middle" font-family="Liberation Sans, Noto Sans CJK JP, sans-serif" font-weight="700" font-size="16" fill="#fff">フォローする</text>
<text x="15" y="740" font-family="Liberation Sans, Noto Sans CJK JP, sans-serif" font-size="16.200" fill="#fff">今日ご紹介するのはみんな憧れのリゾート地、ワイ...</text>
<path d="M6.500 761.500v10.500M13 760v10.500M6.500 761.500l6.500-1.500v3l-6.500 1.500z" fill="#fff" stroke="#fff" stroke-width="1.400"/><ellipse cx="4.800" cy="772.500" rx="2.400" ry="1.900" fill="#fff"/><ellipse cx="11.300" cy="771" rx="2.400" ry="1.900" fill="#fff"/>
<text x="17" y="772" font-family="Liberation Sans, sans-serif" font-weight="700" font-size="14" fill="#fff" fill-opacity=".92" textLength="102" lengthAdjust="spacingAndGlyphs">SINIS Instagram</text>
<text x="125.500" y="772" font-family="Liberation Sans, Noto Sans CJK JP, sans-serif" font-size="16" fill="#fff">· オリジナル音源</text>
</svg>
<!--/PHOTO-->
</div>


<!--CHAT-->
<div class="abs" style="left:2282px;top:1284px;width:90px;height:90px;border-radius:36px;background:linear-gradient(#a048aa,#a5489e);box-shadow:0 4px 14px rgba(0,0,0,.28),inset 0 0 0 1.500px rgba(255,255,255,.18)"></div>
<svg class="abs" style="left:2300px;top:1302px" width="56" height="56" viewBox="0 0 56 56"><path d="M26 3.500a23.500 23.500 0 1 0 8.500 45.400c4 .300 8.500 1.500 13 1.800-1.500-4-2-8-2.200-11.200A23.500 23.500 0 0 0 26 3.500z" fill="#fff"/><path d="M12.500 30.500c3 5.500 8 8.500 13.800 8.500s10.800-3 13.800-8.500" fill="none" stroke="#a148a8" stroke-width="6"/></svg>
<div class="abs" style="left:2349px;top:1391px;width:40px;height:40px;border-radius:20px;background:#111;border:2px solid #555"></div>


</div>
</body>
</html>
